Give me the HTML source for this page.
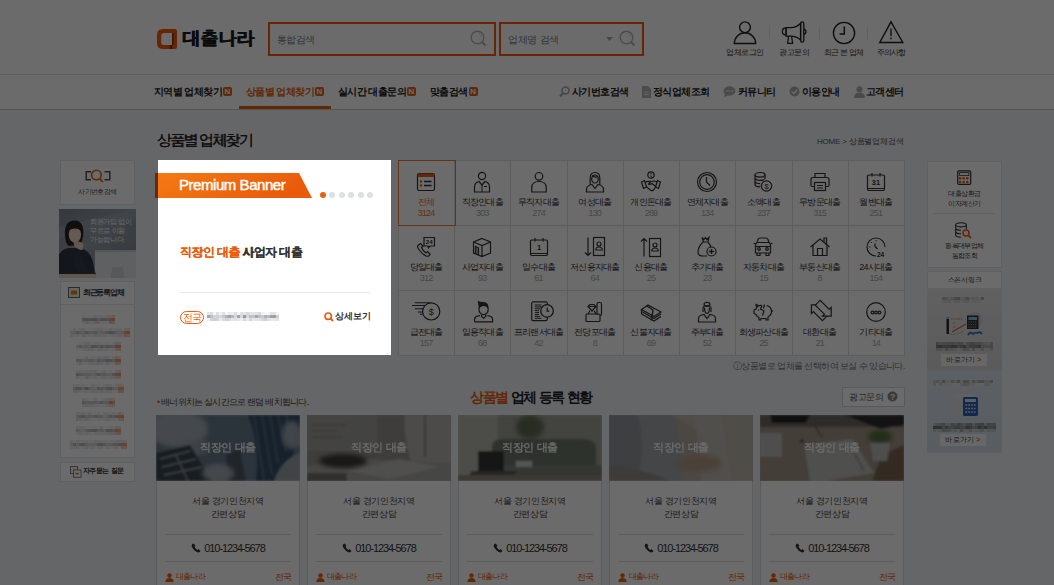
<!DOCTYPE html>
<html><head><meta charset="utf-8">
<style>
*{margin:0;padding:0;box-sizing:border-box}
html,body{width:1054px;height:585px;overflow:hidden}
body{position:relative;background:#f1f2f5;font-family:"Liberation Sans",sans-serif;color:#333}
.a{position:absolute;white-space:nowrap}
#hdr{position:absolute;left:0;top:0;width:1054px;height:109px;background:#fff}
#l1{position:absolute;left:0;top:74px;width:1054px;height:1px;background:#e3e3e3}
#l2{position:absolute;left:0;top:109px;width:1054px;height:1px;background:#c9c9c9}
.sb{position:absolute;border:2px solid #f85a0a;height:34px;top:22px}
.nav{font-size:10px;font-weight:bold;color:#222;top:85.3px;letter-spacing:-0.6px}
.nb{display:inline-block;width:9px;height:9px;border-radius:2px;background:#e8650f;color:#fff;font-size:8px;line-height:9px;text-align:center;vertical-align:1.5px;margin-left:1px;font-weight:bold;letter-spacing:0}
.hl{font-size:8px;color:#333;top:47px;letter-spacing:-0.5px}
.sep{position:absolute;width:1px;height:12px;top:27px;background:#e6e6e6}
#grid{position:absolute;left:398px;top:160px;width:506px;height:195px;background:#fff;border-left:1px solid #ddd;border-top:1px solid #ddd}
.cell{position:absolute;width:56.33px;height:65px;border-right:1px solid #ddd;border-bottom:1px solid #ddd}
.cell svg{position:absolute;left:17px;top:10px;overflow:visible}
.cl{position:absolute;left:0;width:100%;text-align:center;font-size:9px;color:#333;top:36px;letter-spacing:-0.75px}
.cn{position:absolute;left:0;width:100%;text-align:center;font-size:9px;color:#aaa;top:48px;letter-spacing:-0.8px}
.box{position:absolute;background:#fff;border:1px solid #e4e4e4}
.card{position:absolute;top:415px;width:144px;height:180px;background:#fff;border:1px solid #dcdcdc}
.ci{position:absolute;left:-1px;top:-1px;width:144px;height:66px}
.ct{position:absolute;left:0;width:100%;text-align:center;color:#fff;font-size:11px;font-weight:bold;top:24px;letter-spacing:-0.8px;word-spacing:2px;opacity:0.92}
.cb1{position:absolute;left:0;width:100%;text-align:center;font-size:9px;color:#444;letter-spacing:-0.3px;line-height:13.2px;top:79px}
.hr{position:absolute;left:8px;width:126px;height:1px;background:#ddd}
.ph{position:absolute;left:0;width:100%;text-align:center;font-size:11px;color:#333;top:126px;letter-spacing:-1.1px}
#ov{position:absolute;left:0;top:0;width:1054px;height:585px;background:rgba(0,0,0,0.58)}
#pop{position:absolute;left:158px;top:160px;width:233px;height:195px;background:#fff}
</style></head><body>
<div id="hdr"></div><div id="l1"></div><div id="l2"></div>

<!-- logo -->
<svg class="a" style="left:157px;top:29px" width="20" height="20" viewBox="0 0 20 20">
<defs><linearGradient id="lgr" x1="0" y1="0" x2="1" y2="0"><stop offset="0" stop-color="#3a0d00"/><stop offset="1" stop-color="#f85a0a" stop-opacity="0"/></linearGradient>
<linearGradient id="lgb" x1="0" y1="0" x2="1" y2="0"><stop offset="0" stop-color="#f85a0a" stop-opacity="0"/><stop offset="1" stop-color="#3a0d00"/></linearGradient></defs>
<path d="M6 0H18Q20 0 20 2V18Q20 20 18 20H6Q0 20 0 14V6Q0 0 6 0ZM7.3 3.9Q4.2 3.9 4.2 7V12.9Q4.2 16.1 7.3 16.1H15.2V3.9Z" fill="#f85a0a" fill-rule="evenodd"/>
<rect x="15.2" y="3.9" width="3" height="12.2" fill="url(#lgr)" opacity="0.9"/>
<rect x="10" y="16.1" width="5.2" height="3.9" fill="url(#lgb)" opacity="0.9"/>
</svg>
<div class="a" style="left:182px;top:26px;font-size:18px;font-weight:bold;color:#1a1a1a;letter-spacing:0px;text-shadow:0.5px 0 0 #1a1a1a">대출나라</div>

<!-- search -->
<div class="sb" style="left:268px;width:228px"></div>
<div class="a" style="left:277px;top:33px;font-size:10px;color:#808080;letter-spacing:-0.67px">통합검색</div>
<svg class="a" style="left:469px;top:29px" width="18" height="18" viewBox="0 0 18 18"><circle cx="8.5" cy="8.5" r="6.3" fill="none" stroke="#b5b5b5" stroke-width="1.4"/><path d="M13 13L16.5 16.5" stroke="#b5b5b5" stroke-width="2.2"/><path d="M9.5 4.5Q12 5 12.6 7.5" fill="none" stroke="#c8c8c8" stroke-width="0.9"/></svg>
<div class="sb" style="left:499px;width:145px"></div>
<div class="a" style="left:508px;top:33px;font-size:10px;color:#808080;letter-spacing:-0.3px">업체명 검색</div>
<svg class="a" style="left:606px;top:37px" width="8" height="5"><path d="M0 0H7L3.5 4Z" fill="#aaa"/></svg>
<svg class="a" style="left:618px;top:29px" width="18" height="18" viewBox="0 0 18 18"><circle cx="8.5" cy="8.5" r="6.3" fill="none" stroke="#b5b5b5" stroke-width="1.4"/><path d="M13 13L16.5 16.5" stroke="#b5b5b5" stroke-width="2.2"/><path d="M9.5 4.5Q12 5 12.6 7.5" fill="none" stroke="#c8c8c8" stroke-width="0.9"/></svg>

<!-- header icons -->
<svg class="a" style="left:732px;top:20px" width="26" height="26" viewBox="0 0 26 26"><circle cx="13" cy="7.3" r="5.4" fill="none" stroke="#222" stroke-width="1.4"/><path d="M2.3 23.5A10.7 10.7 0 0 1 23.7 23.5Z" fill="none" stroke="#222" stroke-width="1.4"/></svg>
<div class="a hl" style="left:726px">업체로그인</div>
<div class="sep" style="left:769px"></div>
<svg class="a" style="left:781px;top:20px" width="28" height="26" viewBox="0 0 28 26"><path d="M5 8.2H3.6Q1.4 8.4 1.4 11.5Q1.4 14.6 3.6 14.8H5Z" fill="none" stroke="#222" stroke-width="1.2"/><path d="M5 7.6H9.5Q15.5 7.6 19.6 3.2V20Q15.5 16.2 9.5 16.2H5Z" fill="none" stroke="#222" stroke-width="1.3" stroke-linejoin="round"/><rect x="19.6" y="1.8" width="3.2" height="20.3" rx="1.6" fill="none" stroke="#222" stroke-width="1.3"/><path d="M22.8 9.2Q25 9.6 25 11.8Q25 14 22.8 14.4" fill="none" stroke="#222" stroke-width="1.2"/><path d="M7.6 16.2L6.6 23.4H11.6L10.6 16.2" fill="none" stroke="#222" stroke-width="1.2" stroke-linejoin="round"/></svg>
<div class="a hl" style="left:779px">광고문의</div>
<div class="sep" style="left:819px"></div>
<svg class="a" style="left:832px;top:21px" width="24" height="24" viewBox="0 0 24 24"><circle cx="12" cy="12" r="10.6" fill="none" stroke="#222" stroke-width="1.4"/><path d="M12.3 5.5V13H7.6" fill="none" stroke="#222" stroke-width="1.5"/></svg>
<div class="a hl" style="left:824px;letter-spacing:-0.75px">최근 본 업체</div>
<div class="sep" style="left:867px"></div>
<svg class="a" style="left:878px;top:20px" width="26" height="24" viewBox="0 0 26 24"><path d="M13 1.8L24.8 22.5H1.8Z" fill="none" stroke="#222" stroke-width="1.4" stroke-linejoin="miter"/><path d="M13 8.6V16.2M13 17.6V19.3" stroke="#222" stroke-width="1.3"/></svg>
<div class="a hl" style="left:877px;letter-spacing:-0.9px">주의사항</div>

<!-- nav -->
<div class="a nav" style="left:154px">지역별 업체찾기<span class="nb">N</span></div>
<div class="a nav" style="left:246px;color:#e8600f">상품별 업체찾기<span class="nb">N</span></div>
<div style="position:absolute;left:239px;top:106px;width:92px;height:3px;background:#e8600f"></div>
<div class="a nav" style="left:338px">실시간 대출문의<span class="nb">N</span></div>
<div class="a nav" style="left:430px">맞춤검색<span class="nb">N</span></div>

<svg class="a" style="left:559px;top:86px" width="11" height="12" viewBox="0 0 11 12"><circle cx="6.5" cy="4.5" r="3.5" fill="none" stroke="#aaa" stroke-width="1.6"/><path d="M4 7L1 10.5" stroke="#aaa" stroke-width="2"/></svg>
<div class="a nav" style="left:572px">사기번호검색</div>
<svg class="a" style="left:642px;top:86px" width="9" height="12" viewBox="0 0 9 12"><path d="M0 0H6L9 3V12H0Z" fill="#b5b5b5"/><path d="M2 6H7M2 8.5H7" stroke="#fff" stroke-width="0.8"/></svg>
<div class="a nav" style="left:653px">정식업체조회</div>
<svg class="a" style="left:723px;top:86px" width="13" height="12" viewBox="0 0 13 12"><ellipse cx="6.5" cy="5" rx="6" ry="4.7" fill="#b0b0b0"/><path d="M2 8L1 11.5L5 9" fill="#b0b0b0"/><circle cx="4" cy="5" r="0.8" fill="#fff"/><circle cx="6.5" cy="5" r="0.8" fill="#fff"/><circle cx="9" cy="5" r="0.8" fill="#fff"/></svg>
<div class="a nav" style="left:738px">커뮤니티</div>
<svg class="a" style="left:789px;top:86px" width="11" height="11" viewBox="0 0 11 11"><circle cx="5.5" cy="5.5" r="5" fill="#b0b0b0"/><path d="M2.8 5.6L4.8 7.5L8.3 3.8" fill="none" stroke="#fff" stroke-width="1.3"/></svg>
<div class="a nav" style="left:802px">이용안내</div>
<svg class="a" style="left:854px;top:86px" width="11" height="12" viewBox="0 0 11 12"><circle cx="5.5" cy="3.2" r="3" fill="#b0b0b0"/><path d="M0 12Q0 6.5 5.5 6.5Q11 6.5 11 12Z" fill="#b0b0b0"/></svg>
<div class="a nav" style="left:866px">고객센터</div>

<!-- title -->
<div class="a" style="left:157px;top:131px;font-size:15px;color:#222;letter-spacing:-1.8px;text-shadow:0.35px 0 0 #222">상품별 업체찾기</div>
<div class="a" style="left:817px;top:136px;font-size:8px;color:#555;letter-spacing:-0.2px">HOME &gt; 상품별업체검색</div>

<!-- left sidebar -->
<div class="box" style="left:60px;top:160px;width:75px;height:45px"></div>
<svg class="a" style="left:85px;top:168px" width="26" height="15" viewBox="0 0 26 15"><path d="M6 3.8H1.2V11.8H6M19.5 3.8H24.8V11.8H19.5" fill="none" stroke="#555" stroke-width="1.5"/><circle cx="11.4" cy="7" r="4.8" fill="none" stroke="#e8600f" stroke-width="1.6"/><path d="M14.6 10.4L17.8 14" stroke="#e8600f" stroke-width="1.8"/></svg>
<div class="a" style="left:60px;width:75px;text-align:center;top:187px;font-size:7px;color:#444;letter-spacing:-0.6px">사기번호검색</div>
<svg class="a" style="left:59px;top:208.5px" width="77" height="69" viewBox="0 0 75 69" preserveAspectRatio="none">
<defs><linearGradient id="wb" x1="0" y1="0" x2="1" y2="1"><stop offset="0" stop-color="#7f8995"/><stop offset="0.45" stop-color="#959fab"/><stop offset="1" stop-color="#7a8490"/></linearGradient><filter id="wbl"><feGaussianBlur stdDeviation="0.6"/></filter></defs>
<rect width="75" height="69" fill="url(#wb)"/>
<path d="M0 18L75 0V8L0 30Z" fill="#a9b2bc" opacity="0.35"/>
<rect x="35" y="41" width="40" height="28" fill="#e3e4e6"/>
<rect x="35" y="41" width="40" height="2" fill="#c9cbce"/>
<path d="M52 58H62L64 69H50Z" fill="#d0d2d5"/>
<g filter="url(#wbl)">
<path d="M6 28Q4 12 15 11.5Q25 12 23.5 26Q23 33 20 36L9 37Q6 33 6 28Z" fill="#2b2320"/>
<ellipse cx="15.5" cy="25.5" rx="6" ry="8" fill="#efd6c6"/>
<path d="M9 21Q11 15 17 16Q21.5 17 21.5 22Q18 18.5 12.5 20Z" fill="#2b2320"/>
<path d="M-2 69V50Q0 41 9 39H21Q32 42 34 58L36 69Z" fill="#2d3542"/>
<path d="M14 33Q20 31 24 35L23 41Q18 41 15 37Z" fill="#eccfbc"/>
<path d="M19 40L28 60L36 64L35 69H22L13 52Z" fill="#323b49"/>
<rect x="0" y="65" width="36" height="4" fill="#e6d0c2"/>
</g>
<text x="30" y="15" font-size="7" fill="#f4f4f4" letter-spacing="-0.35" font-family="Liberation Sans">회원가입 없이</text>
<text x="30" y="24" font-size="7" fill="#f4f4f4" letter-spacing="-0.35" font-family="Liberation Sans">무료로 이용</text>
<text x="30" y="33" font-size="7" fill="#f4f4f4" letter-spacing="-0.35" font-family="Liberation Sans">가능합니다.</text>
</svg>
<div class="box" style="left:60px;top:281px;width:75px;height:177px"></div>
<div class="a" style="left:61px;top:304px;width:73px;height:1px;background:#e6e6e6"></div>
<svg class="a" style="left:68px;top:287px" width="12" height="11" viewBox="0 0 12 11"><rect x="0.5" y="0.5" width="11" height="10" fill="#eee" stroke="#666"/><rect x="3" y="3.5" width="6" height="4" fill="#e8850f"/></svg>
<div class="a" style="left:83px;top:287px;font-size:8px;color:#333;font-weight:bold;letter-spacing:-1.3px">최근등록업체</div>
<div class="a" style="left:82.0px;top:314.5px;width:3px;height:3px;background:#f2f2f5"></div><div class="a" style="left:82.0px;top:317.5px;width:3px;height:3px;background:#bdbdc0"></div><div class="a" style="left:82.0px;top:320.5px;width:3px;height:3px;background:#ededf0"></div><div class="a" style="left:85.0px;top:314.5px;width:3px;height:3px;background:#fcfcff"></div><div class="a" style="left:85.0px;top:317.5px;width:3px;height:3px;background:#b7b7ba"></div><div class="a" style="left:85.0px;top:320.5px;width:3px;height:3px;background:#e3e3e6"></div><div class="a" style="left:88.0px;top:314.5px;width:3px;height:3px;background:#f9f9fc"></div><div class="a" style="left:88.0px;top:317.5px;width:3px;height:3px;background:#bababd"></div><div class="a" style="left:88.0px;top:320.5px;width:3px;height:3px;background:#ececef"></div><div class="a" style="left:91.0px;top:314.5px;width:3px;height:3px;background:#fafafd"></div><div class="a" style="left:91.0px;top:317.5px;width:3px;height:3px;background:#b7b7ba"></div><div class="a" style="left:91.0px;top:320.5px;width:3px;height:3px;background:#f1f1f4"></div><div class="a" style="left:94.0px;top:314.5px;width:3px;height:3px;background:#eeeef1"></div><div class="a" style="left:94.0px;top:317.5px;width:3px;height:3px;background:#b6b6b9"></div><div class="a" style="left:94.0px;top:320.5px;width:3px;height:3px;background:#e3e3e6"></div><div class="a" style="left:97.0px;top:314.5px;width:3px;height:3px;background:#f5f5f8"></div><div class="a" style="left:97.0px;top:317.5px;width:3px;height:3px;background:#ceced1"></div><div class="a" style="left:97.0px;top:320.5px;width:3px;height:3px;background:#e3e3e6"></div><div class="a" style="left:100.0px;top:314.5px;width:3px;height:3px;background:#efeff2"></div><div class="a" style="left:100.0px;top:317.5px;width:3px;height:3px;background:#b9b9bc"></div><div class="a" style="left:100.0px;top:320.5px;width:3px;height:3px;background:#f2f2f5"></div><div class="a" style="left:103.0px;top:314.5px;width:3px;height:3px;background:#f5f5f8"></div><div class="a" style="left:103.0px;top:317.5px;width:3px;height:3px;background:#b7b7ba"></div><div class="a" style="left:103.0px;top:320.5px;width:3px;height:3px;background:#f3f3f6"></div><div class="a" style="left:106.0px;top:314.5px;width:3px;height:3px;background:#ebebee"></div><div class="a" style="left:106.0px;top:317.5px;width:3px;height:3px;background:#c2c2c5"></div><div class="a" style="left:106.0px;top:320.5px;width:3px;height:3px;background:#f5f5f8"></div><div class="a" style="left:109.0px;top:314.5px;width:3px;height:3px;background:#fde4c7"></div><div class="a" style="left:109.0px;top:317.5px;width:3px;height:3px;background:#f4a678"></div><div class="a" style="left:109.0px;top:320.5px;width:3px;height:3px;background:#e7c8b3"></div><div class="a" style="left:112.0px;top:314.5px;width:3px;height:3px;background:#fad6cf"></div><div class="a" style="left:112.0px;top:317.5px;width:3px;height:3px;background:#ef987d"></div><div class="a" style="left:112.0px;top:320.5px;width:3px;height:3px;background:#e9d3bb"></div><div class="a" style="left:69.5px;top:328.4px;width:3px;height:3px;background:#f9f9fc"></div><div class="a" style="left:69.5px;top:331.4px;width:3px;height:3px;background:#dfdfe2"></div><div class="a" style="left:69.5px;top:334.4px;width:3px;height:3px;background:#e6e6e9"></div><div class="a" style="left:72.5px;top:328.4px;width:3px;height:3px;background:#ebebee"></div><div class="a" style="left:72.5px;top:331.4px;width:3px;height:3px;background:#d9d9dc"></div><div class="a" style="left:72.5px;top:334.4px;width:3px;height:3px;background:#f3f3f6"></div><div class="a" style="left:75.5px;top:328.4px;width:3px;height:3px;background:#fcfcff"></div><div class="a" style="left:75.5px;top:331.4px;width:3px;height:3px;background:#c0c0c3"></div><div class="a" style="left:75.5px;top:334.4px;width:3px;height:3px;background:#ececef"></div><div class="a" style="left:78.5px;top:328.4px;width:3px;height:3px;background:#ebebee"></div><div class="a" style="left:78.5px;top:331.4px;width:3px;height:3px;background:#d7d7da"></div><div class="a" style="left:78.5px;top:334.4px;width:3px;height:3px;background:#f7f7fa"></div><div class="a" style="left:81.5px;top:328.4px;width:3px;height:3px;background:#eaeaed"></div><div class="a" style="left:81.5px;top:331.4px;width:3px;height:3px;background:#d8d8db"></div><div class="a" style="left:81.5px;top:334.4px;width:3px;height:3px;background:#e2e2e5"></div><div class="a" style="left:84.5px;top:328.4px;width:3px;height:3px;background:#fbfbfe"></div><div class="a" style="left:84.5px;top:331.4px;width:3px;height:3px;background:#c1c1c4"></div><div class="a" style="left:84.5px;top:334.4px;width:3px;height:3px;background:#f0f0f3"></div><div class="a" style="left:87.5px;top:328.4px;width:3px;height:3px;background:#f9f9fc"></div><div class="a" style="left:87.5px;top:331.4px;width:3px;height:3px;background:#cfcfd2"></div><div class="a" style="left:87.5px;top:334.4px;width:3px;height:3px;background:#ebebee"></div><div class="a" style="left:90.5px;top:328.4px;width:3px;height:3px;background:#f6f6f9"></div><div class="a" style="left:90.5px;top:331.4px;width:3px;height:3px;background:#d9d9dc"></div><div class="a" style="left:90.5px;top:334.4px;width:3px;height:3px;background:#efeff2"></div><div class="a" style="left:93.5px;top:328.4px;width:3px;height:3px;background:#f3f3f6"></div><div class="a" style="left:93.5px;top:331.4px;width:3px;height:3px;background:#c7c7ca"></div><div class="a" style="left:93.5px;top:334.4px;width:3px;height:3px;background:#e8e8eb"></div><div class="a" style="left:96.5px;top:328.4px;width:3px;height:3px;background:#ededf0"></div><div class="a" style="left:96.5px;top:331.4px;width:3px;height:3px;background:#e0e0e3"></div><div class="a" style="left:96.5px;top:334.4px;width:3px;height:3px;background:#e8e8eb"></div><div class="a" style="left:99.5px;top:328.4px;width:3px;height:3px;background:#eaeaed"></div><div class="a" style="left:99.5px;top:331.4px;width:3px;height:3px;background:#d8d8db"></div><div class="a" style="left:99.5px;top:334.4px;width:3px;height:3px;background:#eaeaed"></div><div class="a" style="left:102.5px;top:328.4px;width:3px;height:3px;background:#f8f8fb"></div><div class="a" style="left:102.5px;top:331.4px;width:3px;height:3px;background:#d3d3d6"></div><div class="a" style="left:102.5px;top:334.4px;width:3px;height:3px;background:#ebebee"></div><div class="a" style="left:105.5px;top:328.4px;width:3px;height:3px;background:#f6f6f9"></div><div class="a" style="left:105.5px;top:331.4px;width:3px;height:3px;background:#c6c6c9"></div><div class="a" style="left:105.5px;top:334.4px;width:3px;height:3px;background:#f4f4f7"></div><div class="a" style="left:108.5px;top:328.4px;width:3px;height:3px;background:#eaeaed"></div><div class="a" style="left:108.5px;top:331.4px;width:3px;height:3px;background:#bbbbbe"></div><div class="a" style="left:108.5px;top:334.4px;width:3px;height:3px;background:#f1f1f4"></div><div class="a" style="left:111.5px;top:328.4px;width:3px;height:3px;background:#f5f5f8"></div><div class="a" style="left:111.5px;top:331.4px;width:3px;height:3px;background:#bebec1"></div><div class="a" style="left:111.5px;top:334.4px;width:3px;height:3px;background:#ebebee"></div><div class="a" style="left:114.5px;top:328.4px;width:3px;height:3px;background:#ececef"></div><div class="a" style="left:114.5px;top:331.4px;width:3px;height:3px;background:#d3d3d6"></div><div class="a" style="left:114.5px;top:334.4px;width:3px;height:3px;background:#eeeef1"></div><div class="a" style="left:117.5px;top:328.4px;width:3px;height:3px;background:#e9e9ec"></div><div class="a" style="left:117.5px;top:331.4px;width:3px;height:3px;background:#dedee1"></div><div class="a" style="left:117.5px;top:334.4px;width:3px;height:3px;background:#e3e3e6"></div><div class="a" style="left:120.5px;top:328.4px;width:3px;height:3px;background:#f9f9fc"></div><div class="a" style="left:120.5px;top:331.4px;width:3px;height:3px;background:#d8d8db"></div><div class="a" style="left:120.5px;top:334.4px;width:3px;height:3px;background:#ebebee"></div><div class="a" style="left:123.5px;top:328.4px;width:3px;height:3px;background:#f3e8d1"></div><div class="a" style="left:123.5px;top:331.4px;width:3px;height:3px;background:#f5a37e"></div><div class="a" style="left:123.5px;top:334.4px;width:3px;height:3px;background:#f4c3b4"></div><div class="a" style="left:126.5px;top:328.4px;width:3px;height:3px;background:#f1e1dc"></div><div class="a" style="left:126.5px;top:331.4px;width:3px;height:3px;background:#f7966d"></div><div class="a" style="left:126.5px;top:334.4px;width:3px;height:3px;background:#fdd7bb"></div><div class="a" style="left:75.6px;top:342.3px;width:3px;height:3px;background:#fcfcff"></div><div class="a" style="left:75.6px;top:345.3px;width:3px;height:3px;background:#d8d8db"></div><div class="a" style="left:75.6px;top:348.3px;width:3px;height:3px;background:#f6f6f9"></div><div class="a" style="left:78.6px;top:342.3px;width:3px;height:3px;background:#f6f6f9"></div><div class="a" style="left:78.6px;top:345.3px;width:3px;height:3px;background:#c6c6c9"></div><div class="a" style="left:78.6px;top:348.3px;width:3px;height:3px;background:#f7f7fa"></div><div class="a" style="left:81.6px;top:342.3px;width:3px;height:3px;background:#f4f4f7"></div><div class="a" style="left:81.6px;top:345.3px;width:3px;height:3px;background:#dedee1"></div><div class="a" style="left:81.6px;top:348.3px;width:3px;height:3px;background:#ececef"></div><div class="a" style="left:84.6px;top:342.3px;width:3px;height:3px;background:#e8e8eb"></div><div class="a" style="left:84.6px;top:345.3px;width:3px;height:3px;background:#d1d1d4"></div><div class="a" style="left:84.6px;top:348.3px;width:3px;height:3px;background:#ececef"></div><div class="a" style="left:87.6px;top:342.3px;width:3px;height:3px;background:#ededf0"></div><div class="a" style="left:87.6px;top:345.3px;width:3px;height:3px;background:#dbdbde"></div><div class="a" style="left:87.6px;top:348.3px;width:3px;height:3px;background:#e4e4e7"></div><div class="a" style="left:90.6px;top:342.3px;width:3px;height:3px;background:#f7f7fa"></div><div class="a" style="left:90.6px;top:345.3px;width:3px;height:3px;background:#b7b7ba"></div><div class="a" style="left:90.6px;top:348.3px;width:3px;height:3px;background:#e7e7ea"></div><div class="a" style="left:93.6px;top:342.3px;width:3px;height:3px;background:#f1f1f4"></div><div class="a" style="left:93.6px;top:345.3px;width:3px;height:3px;background:#bcbcbf"></div><div class="a" style="left:93.6px;top:348.3px;width:3px;height:3px;background:#f8f8fb"></div><div class="a" style="left:96.6px;top:342.3px;width:3px;height:3px;background:#efeff2"></div><div class="a" style="left:96.6px;top:345.3px;width:3px;height:3px;background:#cdcdd0"></div><div class="a" style="left:96.6px;top:348.3px;width:3px;height:3px;background:#ededf0"></div><div class="a" style="left:99.6px;top:342.3px;width:3px;height:3px;background:#f7f7fa"></div><div class="a" style="left:99.6px;top:345.3px;width:3px;height:3px;background:#b9b9bc"></div><div class="a" style="left:99.6px;top:348.3px;width:3px;height:3px;background:#e6e6e9"></div><div class="a" style="left:102.6px;top:342.3px;width:3px;height:3px;background:#f6f6f9"></div><div class="a" style="left:102.6px;top:345.3px;width:3px;height:3px;background:#cdcdd0"></div><div class="a" style="left:102.6px;top:348.3px;width:3px;height:3px;background:#f2f2f5"></div><div class="a" style="left:105.6px;top:342.3px;width:3px;height:3px;background:#f0f0f3"></div><div class="a" style="left:105.6px;top:345.3px;width:3px;height:3px;background:#bcbcbf"></div><div class="a" style="left:105.6px;top:348.3px;width:3px;height:3px;background:#eeeef1"></div><div class="a" style="left:108.6px;top:342.3px;width:3px;height:3px;background:#f9f9fc"></div><div class="a" style="left:108.6px;top:345.3px;width:3px;height:3px;background:#c5c5c8"></div><div class="a" style="left:108.6px;top:348.3px;width:3px;height:3px;background:#f7f7fa"></div><div class="a" style="left:111.6px;top:342.3px;width:3px;height:3px;background:#f5f5f8"></div><div class="a" style="left:111.6px;top:345.3px;width:3px;height:3px;background:#cacacd"></div><div class="a" style="left:111.6px;top:348.3px;width:3px;height:3px;background:#f6f6f9"></div><div class="a" style="left:114.6px;top:342.3px;width:3px;height:3px;background:#f5d9ca"></div><div class="a" style="left:114.6px;top:345.3px;width:3px;height:3px;background:#e49970"></div><div class="a" style="left:114.6px;top:348.3px;width:3px;height:3px;background:#edd6b9"></div><div class="a" style="left:117.6px;top:342.3px;width:3px;height:3px;background:#e9e1d8"></div><div class="a" style="left:117.6px;top:345.3px;width:3px;height:3px;background:#e79c75"></div><div class="a" style="left:117.6px;top:348.3px;width:3px;height:3px;background:#e6c5bf"></div><div class="a" style="left:75.6px;top:356.2px;width:3px;height:3px;background:#f9f9fc"></div><div class="a" style="left:75.6px;top:359.2px;width:3px;height:3px;background:#cbcbce"></div><div class="a" style="left:75.6px;top:362.2px;width:3px;height:3px;background:#f4f4f7"></div><div class="a" style="left:78.6px;top:356.2px;width:3px;height:3px;background:#fafafd"></div><div class="a" style="left:78.6px;top:359.2px;width:3px;height:3px;background:#c8c8cb"></div><div class="a" style="left:78.6px;top:362.2px;width:3px;height:3px;background:#e5e5e8"></div><div class="a" style="left:81.6px;top:356.2px;width:3px;height:3px;background:#f8f8fb"></div><div class="a" style="left:81.6px;top:359.2px;width:3px;height:3px;background:#dbdbde"></div><div class="a" style="left:81.6px;top:362.2px;width:3px;height:3px;background:#f5f5f8"></div><div class="a" style="left:84.6px;top:356.2px;width:3px;height:3px;background:#e9e9ec"></div><div class="a" style="left:84.6px;top:359.2px;width:3px;height:3px;background:#d1d1d4"></div><div class="a" style="left:84.6px;top:362.2px;width:3px;height:3px;background:#f6f6f9"></div><div class="a" style="left:87.6px;top:356.2px;width:3px;height:3px;background:#f9f9fc"></div><div class="a" style="left:87.6px;top:359.2px;width:3px;height:3px;background:#cdcdd0"></div><div class="a" style="left:87.6px;top:362.2px;width:3px;height:3px;background:#ededf0"></div><div class="a" style="left:90.6px;top:356.2px;width:3px;height:3px;background:#f4f4f7"></div><div class="a" style="left:90.6px;top:359.2px;width:3px;height:3px;background:#cdcdd0"></div><div class="a" style="left:90.6px;top:362.2px;width:3px;height:3px;background:#e4e4e7"></div><div class="a" style="left:93.6px;top:356.2px;width:3px;height:3px;background:#f7f7fa"></div><div class="a" style="left:93.6px;top:359.2px;width:3px;height:3px;background:#dcdcdf"></div><div class="a" style="left:93.6px;top:362.2px;width:3px;height:3px;background:#ededf0"></div><div class="a" style="left:96.6px;top:356.2px;width:3px;height:3px;background:#e9e9ec"></div><div class="a" style="left:96.6px;top:359.2px;width:3px;height:3px;background:#c0c0c3"></div><div class="a" style="left:96.6px;top:362.2px;width:3px;height:3px;background:#e3e3e6"></div><div class="a" style="left:99.6px;top:356.2px;width:3px;height:3px;background:#eeeef1"></div><div class="a" style="left:99.6px;top:359.2px;width:3px;height:3px;background:#d0d0d3"></div><div class="a" style="left:99.6px;top:362.2px;width:3px;height:3px;background:#e6e6e9"></div><div class="a" style="left:102.6px;top:356.2px;width:3px;height:3px;background:#ebebee"></div><div class="a" style="left:102.6px;top:359.2px;width:3px;height:3px;background:#c9c9cc"></div><div class="a" style="left:102.6px;top:362.2px;width:3px;height:3px;background:#f4f4f7"></div><div class="a" style="left:105.6px;top:356.2px;width:3px;height:3px;background:#e9e9ec"></div><div class="a" style="left:105.6px;top:359.2px;width:3px;height:3px;background:#bababd"></div><div class="a" style="left:105.6px;top:362.2px;width:3px;height:3px;background:#e1e1e4"></div><div class="a" style="left:108.6px;top:356.2px;width:3px;height:3px;background:#fafafd"></div><div class="a" style="left:108.6px;top:359.2px;width:3px;height:3px;background:#bdbdc0"></div><div class="a" style="left:108.6px;top:362.2px;width:3px;height:3px;background:#f2f2f5"></div><div class="a" style="left:111.6px;top:356.2px;width:3px;height:3px;background:#ebebee"></div><div class="a" style="left:111.6px;top:359.2px;width:3px;height:3px;background:#cbcbce"></div><div class="a" style="left:111.6px;top:362.2px;width:3px;height:3px;background:#f4f4f7"></div><div class="a" style="left:114.6px;top:356.2px;width:3px;height:3px;background:#e9d4cc"></div><div class="a" style="left:114.6px;top:359.2px;width:3px;height:3px;background:#f5a070"></div><div class="a" style="left:114.6px;top:362.2px;width:3px;height:3px;background:#fac9bd"></div><div class="a" style="left:117.6px;top:356.2px;width:3px;height:3px;background:#fcddd5"></div><div class="a" style="left:117.6px;top:359.2px;width:3px;height:3px;background:#e5977b"></div><div class="a" style="left:117.6px;top:362.2px;width:3px;height:3px;background:#f4d0c1"></div><div class="a" style="left:75.6px;top:370.1px;width:3px;height:3px;background:#f1f1f4"></div><div class="a" style="left:75.6px;top:373.1px;width:3px;height:3px;background:#b9b9bc"></div><div class="a" style="left:75.6px;top:376.1px;width:3px;height:3px;background:#e5e5e8"></div><div class="a" style="left:78.6px;top:370.1px;width:3px;height:3px;background:#ebebee"></div><div class="a" style="left:78.6px;top:373.1px;width:3px;height:3px;background:#c9c9cc"></div><div class="a" style="left:78.6px;top:376.1px;width:3px;height:3px;background:#f8f8fb"></div><div class="a" style="left:81.6px;top:370.1px;width:3px;height:3px;background:#f0f0f3"></div><div class="a" style="left:81.6px;top:373.1px;width:3px;height:3px;background:#d2d2d5"></div><div class="a" style="left:81.6px;top:376.1px;width:3px;height:3px;background:#f7f7fa"></div><div class="a" style="left:84.6px;top:370.1px;width:3px;height:3px;background:#ededf0"></div><div class="a" style="left:84.6px;top:373.1px;width:3px;height:3px;background:#d5d5d8"></div><div class="a" style="left:84.6px;top:376.1px;width:3px;height:3px;background:#e1e1e4"></div><div class="a" style="left:87.6px;top:370.1px;width:3px;height:3px;background:#eeeef1"></div><div class="a" style="left:87.6px;top:373.1px;width:3px;height:3px;background:#d5d5d8"></div><div class="a" style="left:87.6px;top:376.1px;width:3px;height:3px;background:#ececef"></div><div class="a" style="left:90.6px;top:370.1px;width:3px;height:3px;background:#ececef"></div><div class="a" style="left:90.6px;top:373.1px;width:3px;height:3px;background:#e0e0e3"></div><div class="a" style="left:90.6px;top:376.1px;width:3px;height:3px;background:#f2f2f5"></div><div class="a" style="left:93.6px;top:370.1px;width:3px;height:3px;background:#e8e8eb"></div><div class="a" style="left:93.6px;top:373.1px;width:3px;height:3px;background:#d5d5d8"></div><div class="a" style="left:93.6px;top:376.1px;width:3px;height:3px;background:#eaeaed"></div><div class="a" style="left:96.6px;top:370.1px;width:3px;height:3px;background:#fcfcff"></div><div class="a" style="left:96.6px;top:373.1px;width:3px;height:3px;background:#b9b9bc"></div><div class="a" style="left:96.6px;top:376.1px;width:3px;height:3px;background:#f7f7fa"></div><div class="a" style="left:99.6px;top:370.1px;width:3px;height:3px;background:#f0f0f3"></div><div class="a" style="left:99.6px;top:373.1px;width:3px;height:3px;background:#d5d5d8"></div><div class="a" style="left:99.6px;top:376.1px;width:3px;height:3px;background:#ececef"></div><div class="a" style="left:102.6px;top:370.1px;width:3px;height:3px;background:#ededf0"></div><div class="a" style="left:102.6px;top:373.1px;width:3px;height:3px;background:#cacacd"></div><div class="a" style="left:102.6px;top:376.1px;width:3px;height:3px;background:#e8e8eb"></div><div class="a" style="left:105.6px;top:370.1px;width:3px;height:3px;background:#f9f9fc"></div><div class="a" style="left:105.6px;top:373.1px;width:3px;height:3px;background:#d6d6d9"></div><div class="a" style="left:105.6px;top:376.1px;width:3px;height:3px;background:#f1f1f4"></div><div class="a" style="left:108.6px;top:370.1px;width:3px;height:3px;background:#f2f2f5"></div><div class="a" style="left:108.6px;top:373.1px;width:3px;height:3px;background:#dcdcdf"></div><div class="a" style="left:108.6px;top:376.1px;width:3px;height:3px;background:#e8e8eb"></div><div class="a" style="left:111.6px;top:370.1px;width:3px;height:3px;background:#fbfbfe"></div><div class="a" style="left:111.6px;top:373.1px;width:3px;height:3px;background:#c0c0c3"></div><div class="a" style="left:111.6px;top:376.1px;width:3px;height:3px;background:#e8e8eb"></div><div class="a" style="left:114.6px;top:370.1px;width:3px;height:3px;background:#f5e9cd"></div><div class="a" style="left:114.6px;top:373.1px;width:3px;height:3px;background:#e8a47b"></div><div class="a" style="left:114.6px;top:376.1px;width:3px;height:3px;background:#f1d8b2"></div><div class="a" style="left:117.6px;top:370.1px;width:3px;height:3px;background:#e9dad5"></div><div class="a" style="left:117.6px;top:373.1px;width:3px;height:3px;background:#ea9a82"></div><div class="a" style="left:117.6px;top:376.1px;width:3px;height:3px;background:#f9ccc0"></div><div class="a" style="left:72.6px;top:384.0px;width:3px;height:3px;background:#f3f3f6"></div><div class="a" style="left:72.6px;top:387.0px;width:3px;height:3px;background:#cbcbce"></div><div class="a" style="left:72.6px;top:390.0px;width:3px;height:3px;background:#e3e3e6"></div><div class="a" style="left:75.6px;top:384.0px;width:3px;height:3px;background:#efeff2"></div><div class="a" style="left:75.6px;top:387.0px;width:3px;height:3px;background:#bababd"></div><div class="a" style="left:75.6px;top:390.0px;width:3px;height:3px;background:#e8e8eb"></div><div class="a" style="left:78.6px;top:384.0px;width:3px;height:3px;background:#f7f7fa"></div><div class="a" style="left:78.6px;top:387.0px;width:3px;height:3px;background:#c0c0c3"></div><div class="a" style="left:78.6px;top:390.0px;width:3px;height:3px;background:#ebebee"></div><div class="a" style="left:81.6px;top:384.0px;width:3px;height:3px;background:#eeeef1"></div><div class="a" style="left:81.6px;top:387.0px;width:3px;height:3px;background:#d2d2d5"></div><div class="a" style="left:81.6px;top:390.0px;width:3px;height:3px;background:#f4f4f7"></div><div class="a" style="left:84.6px;top:384.0px;width:3px;height:3px;background:#fbfbfe"></div><div class="a" style="left:84.6px;top:387.0px;width:3px;height:3px;background:#b4b4b7"></div><div class="a" style="left:84.6px;top:390.0px;width:3px;height:3px;background:#f0f0f3"></div><div class="a" style="left:87.6px;top:384.0px;width:3px;height:3px;background:#fcfcff"></div><div class="a" style="left:87.6px;top:387.0px;width:3px;height:3px;background:#cacacd"></div><div class="a" style="left:87.6px;top:390.0px;width:3px;height:3px;background:#f5f5f8"></div><div class="a" style="left:90.6px;top:384.0px;width:3px;height:3px;background:#eaeaed"></div><div class="a" style="left:90.6px;top:387.0px;width:3px;height:3px;background:#dedee1"></div><div class="a" style="left:90.6px;top:390.0px;width:3px;height:3px;background:#e4e4e7"></div><div class="a" style="left:93.6px;top:384.0px;width:3px;height:3px;background:#f4f4f7"></div><div class="a" style="left:93.6px;top:387.0px;width:3px;height:3px;background:#e1e1e4"></div><div class="a" style="left:93.6px;top:390.0px;width:3px;height:3px;background:#e7e7ea"></div><div class="a" style="left:96.6px;top:384.0px;width:3px;height:3px;background:#f7f7fa"></div><div class="a" style="left:96.6px;top:387.0px;width:3px;height:3px;background:#bfbfc2"></div><div class="a" style="left:96.6px;top:390.0px;width:3px;height:3px;background:#eeeef1"></div><div class="a" style="left:99.6px;top:384.0px;width:3px;height:3px;background:#fcfcff"></div><div class="a" style="left:99.6px;top:387.0px;width:3px;height:3px;background:#c9c9cc"></div><div class="a" style="left:99.6px;top:390.0px;width:3px;height:3px;background:#e3e3e6"></div><div class="a" style="left:102.6px;top:384.0px;width:3px;height:3px;background:#f4f4f7"></div><div class="a" style="left:102.6px;top:387.0px;width:3px;height:3px;background:#d1d1d4"></div><div class="a" style="left:102.6px;top:390.0px;width:3px;height:3px;background:#ededf0"></div><div class="a" style="left:105.6px;top:384.0px;width:3px;height:3px;background:#eaeaed"></div><div class="a" style="left:105.6px;top:387.0px;width:3px;height:3px;background:#bebec1"></div><div class="a" style="left:105.6px;top:390.0px;width:3px;height:3px;background:#e6e6e9"></div><div class="a" style="left:108.6px;top:384.0px;width:3px;height:3px;background:#ececef"></div><div class="a" style="left:108.6px;top:387.0px;width:3px;height:3px;background:#b5b5b8"></div><div class="a" style="left:108.6px;top:390.0px;width:3px;height:3px;background:#e5e5e8"></div><div class="a" style="left:111.6px;top:384.0px;width:3px;height:3px;background:#fafafd"></div><div class="a" style="left:111.6px;top:387.0px;width:3px;height:3px;background:#d1d1d4"></div><div class="a" style="left:111.6px;top:390.0px;width:3px;height:3px;background:#f5f5f8"></div><div class="a" style="left:114.6px;top:384.0px;width:3px;height:3px;background:#ececef"></div><div class="a" style="left:114.6px;top:387.0px;width:3px;height:3px;background:#dbdbde"></div><div class="a" style="left:114.6px;top:390.0px;width:3px;height:3px;background:#f4f4f7"></div><div class="a" style="left:117.6px;top:384.0px;width:3px;height:3px;background:#f8e7d1"></div><div class="a" style="left:117.6px;top:387.0px;width:3px;height:3px;background:#e6a57d"></div><div class="a" style="left:117.6px;top:390.0px;width:3px;height:3px;background:#eac1b2"></div><div class="a" style="left:120.6px;top:384.0px;width:3px;height:3px;background:#ffe6c9"></div><div class="a" style="left:120.6px;top:387.0px;width:3px;height:3px;background:#f2ab70"></div><div class="a" style="left:120.6px;top:390.0px;width:3px;height:3px;background:#f3c7b8"></div><div class="a" style="left:82.0px;top:397.9px;width:3px;height:3px;background:#e8e8eb"></div><div class="a" style="left:82.0px;top:400.9px;width:3px;height:3px;background:#c4c4c7"></div><div class="a" style="left:82.0px;top:403.9px;width:3px;height:3px;background:#e7e7ea"></div><div class="a" style="left:85.0px;top:397.9px;width:3px;height:3px;background:#f1f1f4"></div><div class="a" style="left:85.0px;top:400.9px;width:3px;height:3px;background:#d4d4d7"></div><div class="a" style="left:85.0px;top:403.9px;width:3px;height:3px;background:#e8e8eb"></div><div class="a" style="left:88.0px;top:397.9px;width:3px;height:3px;background:#fafafd"></div><div class="a" style="left:88.0px;top:400.9px;width:3px;height:3px;background:#c8c8cb"></div><div class="a" style="left:88.0px;top:403.9px;width:3px;height:3px;background:#e9e9ec"></div><div class="a" style="left:91.0px;top:397.9px;width:3px;height:3px;background:#f9f9fc"></div><div class="a" style="left:91.0px;top:400.9px;width:3px;height:3px;background:#ceced1"></div><div class="a" style="left:91.0px;top:403.9px;width:3px;height:3px;background:#e5e5e8"></div><div class="a" style="left:94.0px;top:397.9px;width:3px;height:3px;background:#e9e9ec"></div><div class="a" style="left:94.0px;top:400.9px;width:3px;height:3px;background:#cacacd"></div><div class="a" style="left:94.0px;top:403.9px;width:3px;height:3px;background:#efeff2"></div><div class="a" style="left:97.0px;top:397.9px;width:3px;height:3px;background:#fafafd"></div><div class="a" style="left:97.0px;top:400.9px;width:3px;height:3px;background:#d5d5d8"></div><div class="a" style="left:97.0px;top:403.9px;width:3px;height:3px;background:#eeeef1"></div><div class="a" style="left:100.0px;top:397.9px;width:3px;height:3px;background:#f8f8fb"></div><div class="a" style="left:100.0px;top:400.9px;width:3px;height:3px;background:#bcbcbf"></div><div class="a" style="left:100.0px;top:403.9px;width:3px;height:3px;background:#f2f2f5"></div><div class="a" style="left:103.0px;top:397.9px;width:3px;height:3px;background:#ececef"></div><div class="a" style="left:103.0px;top:400.9px;width:3px;height:3px;background:#d5d5d8"></div><div class="a" style="left:103.0px;top:403.9px;width:3px;height:3px;background:#f1f1f4"></div><div class="a" style="left:106.0px;top:397.9px;width:3px;height:3px;background:#e8e8eb"></div><div class="a" style="left:106.0px;top:400.9px;width:3px;height:3px;background:#d0d0d3"></div><div class="a" style="left:106.0px;top:403.9px;width:3px;height:3px;background:#e6e6e9"></div><div class="a" style="left:109.0px;top:397.9px;width:3px;height:3px;background:#fcd2de"></div><div class="a" style="left:109.0px;top:400.9px;width:3px;height:3px;background:#e69970"></div><div class="a" style="left:109.0px;top:403.9px;width:3px;height:3px;background:#f5d4c9"></div><div class="a" style="left:112.0px;top:397.9px;width:3px;height:3px;background:#ece3c7"></div><div class="a" style="left:112.0px;top:400.9px;width:3px;height:3px;background:#eca97c"></div><div class="a" style="left:112.0px;top:403.9px;width:3px;height:3px;background:#f6d2c1"></div><div class="a" style="left:76.3px;top:411.8px;width:3px;height:3px;background:#ebebee"></div><div class="a" style="left:76.3px;top:414.8px;width:3px;height:3px;background:#d7d7da"></div><div class="a" style="left:76.3px;top:417.8px;width:3px;height:3px;background:#e2e2e5"></div><div class="a" style="left:79.3px;top:411.8px;width:3px;height:3px;background:#efeff2"></div><div class="a" style="left:79.3px;top:414.8px;width:3px;height:3px;background:#c0c0c3"></div><div class="a" style="left:79.3px;top:417.8px;width:3px;height:3px;background:#e9e9ec"></div><div class="a" style="left:82.3px;top:411.8px;width:3px;height:3px;background:#e9e9ec"></div><div class="a" style="left:82.3px;top:414.8px;width:3px;height:3px;background:#bababd"></div><div class="a" style="left:82.3px;top:417.8px;width:3px;height:3px;background:#f1f1f4"></div><div class="a" style="left:85.3px;top:411.8px;width:3px;height:3px;background:#f6f6f9"></div><div class="a" style="left:85.3px;top:414.8px;width:3px;height:3px;background:#d7d7da"></div><div class="a" style="left:85.3px;top:417.8px;width:3px;height:3px;background:#e1e1e4"></div><div class="a" style="left:88.3px;top:411.8px;width:3px;height:3px;background:#eaeaed"></div><div class="a" style="left:88.3px;top:414.8px;width:3px;height:3px;background:#d0d0d3"></div><div class="a" style="left:88.3px;top:417.8px;width:3px;height:3px;background:#ebebee"></div><div class="a" style="left:91.3px;top:411.8px;width:3px;height:3px;background:#fbfbfe"></div><div class="a" style="left:91.3px;top:414.8px;width:3px;height:3px;background:#d4d4d7"></div><div class="a" style="left:91.3px;top:417.8px;width:3px;height:3px;background:#f4f4f7"></div><div class="a" style="left:94.3px;top:411.8px;width:3px;height:3px;background:#f8f8fb"></div><div class="a" style="left:94.3px;top:414.8px;width:3px;height:3px;background:#c0c0c3"></div><div class="a" style="left:94.3px;top:417.8px;width:3px;height:3px;background:#f7f7fa"></div><div class="a" style="left:97.3px;top:411.8px;width:3px;height:3px;background:#f0f0f3"></div><div class="a" style="left:97.3px;top:414.8px;width:3px;height:3px;background:#d0d0d3"></div><div class="a" style="left:97.3px;top:417.8px;width:3px;height:3px;background:#f1f1f4"></div><div class="a" style="left:100.3px;top:411.8px;width:3px;height:3px;background:#f9f9fc"></div><div class="a" style="left:100.3px;top:414.8px;width:3px;height:3px;background:#d2d2d5"></div><div class="a" style="left:100.3px;top:417.8px;width:3px;height:3px;background:#f1f1f4"></div><div class="a" style="left:103.3px;top:411.8px;width:3px;height:3px;background:#efeff2"></div><div class="a" style="left:103.3px;top:414.8px;width:3px;height:3px;background:#e0e0e3"></div><div class="a" style="left:103.3px;top:417.8px;width:3px;height:3px;background:#f1f1f4"></div><div class="a" style="left:106.3px;top:411.8px;width:3px;height:3px;background:#f0f0f3"></div><div class="a" style="left:106.3px;top:414.8px;width:3px;height:3px;background:#d7d7da"></div><div class="a" style="left:106.3px;top:417.8px;width:3px;height:3px;background:#e7e7ea"></div><div class="a" style="left:109.3px;top:411.8px;width:3px;height:3px;background:#f6f6f9"></div><div class="a" style="left:109.3px;top:414.8px;width:3px;height:3px;background:#bcbcbf"></div><div class="a" style="left:109.3px;top:417.8px;width:3px;height:3px;background:#eeeef1"></div><div class="a" style="left:112.3px;top:411.8px;width:3px;height:3px;background:#ebebee"></div><div class="a" style="left:112.3px;top:414.8px;width:3px;height:3px;background:#cdcdd0"></div><div class="a" style="left:112.3px;top:417.8px;width:3px;height:3px;background:#efeff2"></div><div class="a" style="left:115.3px;top:411.8px;width:3px;height:3px;background:#f2f2f5"></div><div class="a" style="left:115.3px;top:414.8px;width:3px;height:3px;background:#b8b8bb"></div><div class="a" style="left:115.3px;top:417.8px;width:3px;height:3px;background:#f6f6f9"></div><div class="a" style="left:118.3px;top:411.8px;width:3px;height:3px;background:#f0dfc8"></div><div class="a" style="left:118.3px;top:414.8px;width:3px;height:3px;background:#e8a975"></div><div class="a" style="left:118.3px;top:417.8px;width:3px;height:3px;background:#e9d9b6"></div><div class="a" style="left:121.3px;top:411.8px;width:3px;height:3px;background:#ffe6db"></div><div class="a" style="left:121.3px;top:414.8px;width:3px;height:3px;background:#ed9874"></div><div class="a" style="left:121.3px;top:417.8px;width:3px;height:3px;background:#eacfb9"></div><div class="a" style="left:75.6px;top:425.7px;width:3px;height:3px;background:#ebebee"></div><div class="a" style="left:75.6px;top:428.7px;width:3px;height:3px;background:#cdcdd0"></div><div class="a" style="left:75.6px;top:431.7px;width:3px;height:3px;background:#f0f0f3"></div><div class="a" style="left:78.6px;top:425.7px;width:3px;height:3px;background:#ededf0"></div><div class="a" style="left:78.6px;top:428.7px;width:3px;height:3px;background:#dedee1"></div><div class="a" style="left:78.6px;top:431.7px;width:3px;height:3px;background:#e8e8eb"></div><div class="a" style="left:81.6px;top:425.7px;width:3px;height:3px;background:#ededf0"></div><div class="a" style="left:81.6px;top:428.7px;width:3px;height:3px;background:#e1e1e4"></div><div class="a" style="left:81.6px;top:431.7px;width:3px;height:3px;background:#eeeef1"></div><div class="a" style="left:84.6px;top:425.7px;width:3px;height:3px;background:#f8f8fb"></div><div class="a" style="left:84.6px;top:428.7px;width:3px;height:3px;background:#cdcdd0"></div><div class="a" style="left:84.6px;top:431.7px;width:3px;height:3px;background:#ebebee"></div><div class="a" style="left:87.6px;top:425.7px;width:3px;height:3px;background:#f5f5f8"></div><div class="a" style="left:87.6px;top:428.7px;width:3px;height:3px;background:#c0c0c3"></div><div class="a" style="left:87.6px;top:431.7px;width:3px;height:3px;background:#ececef"></div><div class="a" style="left:90.6px;top:425.7px;width:3px;height:3px;background:#f2f2f5"></div><div class="a" style="left:90.6px;top:428.7px;width:3px;height:3px;background:#b9b9bc"></div><div class="a" style="left:90.6px;top:431.7px;width:3px;height:3px;background:#f8f8fb"></div><div class="a" style="left:93.6px;top:425.7px;width:3px;height:3px;background:#f3f3f6"></div><div class="a" style="left:93.6px;top:428.7px;width:3px;height:3px;background:#b5b5b8"></div><div class="a" style="left:93.6px;top:431.7px;width:3px;height:3px;background:#ebebee"></div><div class="a" style="left:96.6px;top:425.7px;width:3px;height:3px;background:#f9f9fc"></div><div class="a" style="left:96.6px;top:428.7px;width:3px;height:3px;background:#d1d1d4"></div><div class="a" style="left:96.6px;top:431.7px;width:3px;height:3px;background:#efeff2"></div><div class="a" style="left:99.6px;top:425.7px;width:3px;height:3px;background:#e8e8eb"></div><div class="a" style="left:99.6px;top:428.7px;width:3px;height:3px;background:#cccccf"></div><div class="a" style="left:99.6px;top:431.7px;width:3px;height:3px;background:#ebebee"></div><div class="a" style="left:102.6px;top:425.7px;width:3px;height:3px;background:#f8f8fb"></div><div class="a" style="left:102.6px;top:428.7px;width:3px;height:3px;background:#dbdbde"></div><div class="a" style="left:102.6px;top:431.7px;width:3px;height:3px;background:#eaeaed"></div><div class="a" style="left:105.6px;top:425.7px;width:3px;height:3px;background:#f8f8fb"></div><div class="a" style="left:105.6px;top:428.7px;width:3px;height:3px;background:#b8b8bb"></div><div class="a" style="left:105.6px;top:431.7px;width:3px;height:3px;background:#e4e4e7"></div><div class="a" style="left:108.6px;top:425.7px;width:3px;height:3px;background:#efeff2"></div><div class="a" style="left:108.6px;top:428.7px;width:3px;height:3px;background:#bababd"></div><div class="a" style="left:108.6px;top:431.7px;width:3px;height:3px;background:#e3e3e6"></div><div class="a" style="left:111.6px;top:425.7px;width:3px;height:3px;background:#f0f0f3"></div><div class="a" style="left:111.6px;top:428.7px;width:3px;height:3px;background:#c5c5c8"></div><div class="a" style="left:111.6px;top:431.7px;width:3px;height:3px;background:#e2e2e5"></div><div class="a" style="left:114.6px;top:425.7px;width:3px;height:3px;background:#ffd7ce"></div><div class="a" style="left:114.6px;top:428.7px;width:3px;height:3px;background:#fa9879"></div><div class="a" style="left:114.6px;top:431.7px;width:3px;height:3px;background:#fbc9be"></div><div class="a" style="left:117.6px;top:425.7px;width:3px;height:3px;background:#ede3d6"></div><div class="a" style="left:117.6px;top:428.7px;width:3px;height:3px;background:#f4a382"></div><div class="a" style="left:117.6px;top:431.7px;width:3px;height:3px;background:#f0c3ba"></div><div class="a" style="left:69.5px;top:439.6px;width:3px;height:3px;background:#e9e9ec"></div><div class="a" style="left:69.5px;top:442.6px;width:3px;height:3px;background:#e0e0e3"></div><div class="a" style="left:69.5px;top:445.6px;width:3px;height:3px;background:#e6e6e9"></div><div class="a" style="left:72.5px;top:439.6px;width:3px;height:3px;background:#f5f5f8"></div><div class="a" style="left:72.5px;top:442.6px;width:3px;height:3px;background:#b8b8bb"></div><div class="a" style="left:72.5px;top:445.6px;width:3px;height:3px;background:#e9e9ec"></div><div class="a" style="left:75.5px;top:439.6px;width:3px;height:3px;background:#e8e8eb"></div><div class="a" style="left:75.5px;top:442.6px;width:3px;height:3px;background:#dcdcdf"></div><div class="a" style="left:75.5px;top:445.6px;width:3px;height:3px;background:#e3e3e6"></div><div class="a" style="left:78.5px;top:439.6px;width:3px;height:3px;background:#f0f0f3"></div><div class="a" style="left:78.5px;top:442.6px;width:3px;height:3px;background:#b9b9bc"></div><div class="a" style="left:78.5px;top:445.6px;width:3px;height:3px;background:#f4f4f7"></div><div class="a" style="left:81.5px;top:439.6px;width:3px;height:3px;background:#efeff2"></div><div class="a" style="left:81.5px;top:442.6px;width:3px;height:3px;background:#b8b8bb"></div><div class="a" style="left:81.5px;top:445.6px;width:3px;height:3px;background:#e9e9ec"></div><div class="a" style="left:84.5px;top:439.6px;width:3px;height:3px;background:#ebebee"></div><div class="a" style="left:84.5px;top:442.6px;width:3px;height:3px;background:#d1d1d4"></div><div class="a" style="left:84.5px;top:445.6px;width:3px;height:3px;background:#e1e1e4"></div><div class="a" style="left:87.5px;top:439.6px;width:3px;height:3px;background:#f2f2f5"></div><div class="a" style="left:87.5px;top:442.6px;width:3px;height:3px;background:#d7d7da"></div><div class="a" style="left:87.5px;top:445.6px;width:3px;height:3px;background:#eeeef1"></div><div class="a" style="left:90.5px;top:439.6px;width:3px;height:3px;background:#f0f0f3"></div><div class="a" style="left:90.5px;top:442.6px;width:3px;height:3px;background:#dbdbde"></div><div class="a" style="left:90.5px;top:445.6px;width:3px;height:3px;background:#e5e5e8"></div><div class="a" style="left:93.5px;top:439.6px;width:3px;height:3px;background:#e9e9ec"></div><div class="a" style="left:93.5px;top:442.6px;width:3px;height:3px;background:#d5d5d8"></div><div class="a" style="left:93.5px;top:445.6px;width:3px;height:3px;background:#f7f7fa"></div><div class="a" style="left:96.5px;top:439.6px;width:3px;height:3px;background:#efeff2"></div><div class="a" style="left:96.5px;top:442.6px;width:3px;height:3px;background:#bbbbbe"></div><div class="a" style="left:96.5px;top:445.6px;width:3px;height:3px;background:#e6e6e9"></div><div class="a" style="left:99.5px;top:439.6px;width:3px;height:3px;background:#f0f0f3"></div><div class="a" style="left:99.5px;top:442.6px;width:3px;height:3px;background:#b7b7ba"></div><div class="a" style="left:99.5px;top:445.6px;width:3px;height:3px;background:#e6e6e9"></div><div class="a" style="left:102.5px;top:439.6px;width:3px;height:3px;background:#eeeef1"></div><div class="a" style="left:102.5px;top:442.6px;width:3px;height:3px;background:#c7c7ca"></div><div class="a" style="left:102.5px;top:445.6px;width:3px;height:3px;background:#f5f5f8"></div><div class="a" style="left:105.5px;top:439.6px;width:3px;height:3px;background:#f1f1f4"></div><div class="a" style="left:105.5px;top:442.6px;width:3px;height:3px;background:#d5d5d8"></div><div class="a" style="left:105.5px;top:445.6px;width:3px;height:3px;background:#e7e7ea"></div><div class="a" style="left:108.5px;top:439.6px;width:3px;height:3px;background:#f1f1f4"></div><div class="a" style="left:108.5px;top:442.6px;width:3px;height:3px;background:#d0d0d3"></div><div class="a" style="left:108.5px;top:445.6px;width:3px;height:3px;background:#f1f1f4"></div><div class="a" style="left:111.5px;top:439.6px;width:3px;height:3px;background:#ededf0"></div><div class="a" style="left:111.5px;top:442.6px;width:3px;height:3px;background:#c5c5c8"></div><div class="a" style="left:111.5px;top:445.6px;width:3px;height:3px;background:#ececef"></div><div class="a" style="left:114.5px;top:439.6px;width:3px;height:3px;background:#e8e8eb"></div><div class="a" style="left:114.5px;top:442.6px;width:3px;height:3px;background:#c4c4c7"></div><div class="a" style="left:114.5px;top:445.6px;width:3px;height:3px;background:#e2e2e5"></div><div class="a" style="left:117.5px;top:439.6px;width:3px;height:3px;background:#e8e8eb"></div><div class="a" style="left:117.5px;top:442.6px;width:3px;height:3px;background:#b5b5b8"></div><div class="a" style="left:117.5px;top:445.6px;width:3px;height:3px;background:#f8f8fb"></div><div class="a" style="left:120.5px;top:439.6px;width:3px;height:3px;background:#f9e3cc"></div><div class="a" style="left:120.5px;top:442.6px;width:3px;height:3px;background:#f2a373"></div><div class="a" style="left:120.5px;top:445.6px;width:3px;height:3px;background:#f4c4c7"></div><div class="a" style="left:123.5px;top:439.6px;width:3px;height:3px;background:#fddfdb"></div><div class="a" style="left:123.5px;top:442.6px;width:3px;height:3px;background:#f1a578"></div><div class="a" style="left:123.5px;top:445.6px;width:3px;height:3px;background:#f6cac8"></div>
<div class="box" style="left:60px;top:462px;width:75px;height:20px"></div>
<svg class="a" style="left:70px;top:466px" width="12" height="12" viewBox="0 0 12 12"><rect x="0.5" y="0.5" width="7" height="7" fill="#f2f2f2" stroke="#777" stroke-width="0.9"/><rect x="3.5" y="4" width="7.5" height="7.3" fill="#fff" stroke="#777" stroke-width="0.9"/><path d="M5.2 7.6H9" stroke="#e8850f" stroke-width="1.6"/></svg>
<div class="a" style="left:83px;top:466px;font-size:7px;color:#333;font-weight:bold;letter-spacing:-0.7px;word-spacing:1.5px">자주묻는 질문</div>

<!-- right sidebar -->
<div class="box" style="left:927px;top:161px;width:75px;height:107px"></div>
<div class="a" style="left:933px;top:213px;width:62px;height:1px;background:#e6e6e6"></div>
<svg class="a" style="left:957px;top:170px" width="15" height="16" viewBox="0 0 15 16"><rect x="0.7" y="0.8" width="13" height="13.6" rx="1.2" fill="none" stroke="#333" stroke-width="1.2"/><rect x="2.6" y="2.6" width="9.2" height="3" fill="#fff" stroke="#444" stroke-width="0.9"/><circle cx="3.1" cy="8.3" r="1.35" fill="#e0600f"/><circle cx="6.7" cy="8.3" r="1.35" fill="#e0600f"/><circle cx="10.3" cy="8.3" r="1.35" fill="#e0600f"/><circle cx="3.1" cy="12" r="1.35" fill="#e0600f"/><circle cx="6.7" cy="12" r="1.35" fill="#e0600f"/><circle cx="10.3" cy="12" r="1.35" fill="#e0600f"/></svg>
<div class="a" style="left:927px;width:75px;text-align:center;top:189px;font-size:7px;line-height:9.5px;color:#333;letter-spacing:-0.6px">대출상환금<br>이자계산기</div>
<svg class="a" style="left:955px;top:222px" width="17" height="17" viewBox="0 0 17 17"><ellipse cx="6" cy="2.8" rx="5.3" ry="2.1" fill="none" stroke="#333" stroke-width="1.1"/><path d="M0.7 2.8V13Q0.7 15.2 6 15.2M11.3 2.8V7M0.7 6.2Q1 8.3 6 8.3M0.7 9.7Q1 11.8 6 11.8" fill="none" stroke="#333" stroke-width="1.1"/><circle cx="11" cy="11" r="3" fill="none" stroke="#e8600f" stroke-width="1.5"/><path d="M13.2 13.2L16 16" stroke="#e8600f" stroke-width="1.8"/></svg>
<div class="a" style="left:927px;width:75px;text-align:center;top:241px;font-size:7px;line-height:9.5px;color:#333;letter-spacing:-0.6px">등록대부업체<br>통합조회</div>
<div class="box" style="left:927px;top:271px;width:75px;height:182px"></div>
<div class="a" style="left:927px;width:75px;text-align:center;top:275px;font-size:7px;color:#333;letter-spacing:-0.25px">스폰서링크</div>
<div class="a" style="left:927px;top:288px;width:75px;height:82px;background:linear-gradient(180deg,#e6e6e6,#d9d9d9)"></div>
<div class="a" style="left:927px;top:370px;width:75px;height:82px;background:linear-gradient(180deg,#dbe5ee,#d3dee8)"></div>
<div class="a" style="left:942.0px;top:297.0px;width:3px;height:3px;background:#b7b7ba"></div><div class="a" style="left:942.0px;top:300.0px;width:3px;height:3px;background:#d6d6d9"></div><div class="a" style="left:945.0px;top:297.0px;width:3px;height:3px;background:#bfbfc2"></div><div class="a" style="left:945.0px;top:300.0px;width:3px;height:3px;background:#d4d4d7"></div><div class="a" style="left:948.0px;top:297.0px;width:3px;height:3px;background:#d7d7da"></div><div class="a" style="left:948.0px;top:300.0px;width:3px;height:3px;background:#d0d0d3"></div><div class="a" style="left:951.0px;top:297.0px;width:3px;height:3px;background:#c3c3c6"></div><div class="a" style="left:951.0px;top:300.0px;width:3px;height:3px;background:#dedee1"></div><div class="a" style="left:954.0px;top:297.0px;width:3px;height:3px;background:#adadb0"></div><div class="a" style="left:954.0px;top:300.0px;width:3px;height:3px;background:#d0d0d3"></div><div class="a" style="left:957.0px;top:297.0px;width:3px;height:3px;background:#aaaaad"></div><div class="a" style="left:957.0px;top:300.0px;width:3px;height:3px;background:#cccccf"></div><div class="a" style="left:960.0px;top:297.0px;width:3px;height:3px;background:#d2d2d5"></div><div class="a" style="left:960.0px;top:300.0px;width:3px;height:3px;background:#d8d8db"></div><div class="a" style="left:963.0px;top:297.0px;width:3px;height:3px;background:#c5c5c8"></div><div class="a" style="left:963.0px;top:300.0px;width:3px;height:3px;background:#d2d2d5"></div><div class="a" style="left:966.0px;top:297.0px;width:3px;height:3px;background:#adadb0"></div><div class="a" style="left:966.0px;top:300.0px;width:3px;height:3px;background:#cdcdd0"></div><div class="a" style="left:969.0px;top:297.0px;width:3px;height:3px;background:#d4d4d7"></div><div class="a" style="left:969.0px;top:300.0px;width:3px;height:3px;background:#e0e0e3"></div><div class="a" style="left:972.0px;top:297.0px;width:3px;height:3px;background:#cacacd"></div><div class="a" style="left:972.0px;top:300.0px;width:3px;height:3px;background:#dadadd"></div><div class="a" style="left:975.0px;top:297.0px;width:3px;height:3px;background:#d0d0d3"></div><div class="a" style="left:975.0px;top:300.0px;width:3px;height:3px;background:#d7d7da"></div><div class="a" style="left:978.0px;top:297.0px;width:3px;height:3px;background:#d6d6d9"></div><div class="a" style="left:978.0px;top:300.0px;width:3px;height:3px;background:#dadadd"></div><div class="a" style="left:981.0px;top:297.0px;width:3px;height:3px;background:#acacaf"></div><div class="a" style="left:981.0px;top:300.0px;width:3px;height:3px;background:#e5e5e8"></div><svg class="a" style="left:944px;top:312px" width="40" height="26" viewBox="0 0 40 26"><circle cx="31" cy="8" r="8" fill="#d2d2d2"/><rect x="2.5" y="7" width="2.5" height="15" fill="#2c2c2c"/><rect x="2.5" y="5" width="2.5" height="2" fill="#7fb8c8"/><path d="M5 22Q12 24 20 19" fill="none" stroke="#bbb" stroke-width="1"/><path d="M7 7H18M9 11H12M9 15H12" stroke="#e8600f" stroke-width="0.8" stroke-dasharray="1.5 1"/><path d="M8 20L22 12" stroke="#e8600f" stroke-width="1.3"/><rect x="23" y="3.5" width="11.5" height="13.5" fill="#2f3338"/><rect x="24.5" y="5" width="8.5" height="3" fill="#83c7d6"/><path d="M24.5 10H33M24.5 12.5H33M24.5 15H33" stroke="#9aa" stroke-width="1" stroke-dasharray="1.3 0.9"/><path d="M24 23Q26.5 19 29 22Q31 20 33.5 21Q36 19 38 22" fill="none" stroke="#2b7bb3" stroke-width="1.8"/></svg><div class="a" style="left:936.0px;top:342.0px;width:3px;height:3px;background:#a1a1a4"></div><div class="a" style="left:936.0px;top:345.0px;width:3px;height:3px;background:#828285"></div><div class="a" style="left:936.0px;top:348.0px;width:3px;height:3px;background:#bbbbbe"></div><div class="a" style="left:939.0px;top:342.0px;width:3px;height:3px;background:#b2b2b5"></div><div class="a" style="left:939.0px;top:345.0px;width:3px;height:3px;background:#78787b"></div><div class="a" style="left:939.0px;top:348.0px;width:3px;height:3px;background:#bababd"></div><div class="a" style="left:942.0px;top:342.0px;width:3px;height:3px;background:#adadb0"></div><div class="a" style="left:942.0px;top:345.0px;width:3px;height:3px;background:#8d8d90"></div><div class="a" style="left:942.0px;top:348.0px;width:3px;height:3px;background:#cdcdd0"></div><div class="a" style="left:945.0px;top:342.0px;width:3px;height:3px;background:#aaaaad"></div><div class="a" style="left:945.0px;top:345.0px;width:3px;height:3px;background:#87878a"></div><div class="a" style="left:945.0px;top:348.0px;width:3px;height:3px;background:#acacaf"></div><div class="a" style="left:948.0px;top:342.0px;width:3px;height:3px;background:#a9a9ac"></div><div class="a" style="left:948.0px;top:345.0px;width:3px;height:3px;background:#858588"></div><div class="a" style="left:948.0px;top:348.0px;width:3px;height:3px;background:#c0c0c3"></div><div class="a" style="left:951.0px;top:342.0px;width:3px;height:3px;background:#a1a1a4"></div><div class="a" style="left:951.0px;top:345.0px;width:3px;height:3px;background:#78787b"></div><div class="a" style="left:951.0px;top:348.0px;width:3px;height:3px;background:#bfbfc2"></div><div class="a" style="left:954.0px;top:342.0px;width:3px;height:3px;background:#aeaeb1"></div><div class="a" style="left:954.0px;top:345.0px;width:3px;height:3px;background:#7d7d80"></div><div class="a" style="left:954.0px;top:348.0px;width:3px;height:3px;background:#c8c8cb"></div><div class="a" style="left:957.0px;top:342.0px;width:3px;height:3px;background:#a7a7aa"></div><div class="a" style="left:957.0px;top:345.0px;width:3px;height:3px;background:#98989b"></div><div class="a" style="left:957.0px;top:348.0px;width:3px;height:3px;background:#d3d3d6"></div><div class="a" style="left:960.0px;top:342.0px;width:3px;height:3px;background:#a2a2a5"></div><div class="a" style="left:960.0px;top:345.0px;width:3px;height:3px;background:#87878a"></div><div class="a" style="left:960.0px;top:348.0px;width:3px;height:3px;background:#cacacd"></div><div class="a" style="left:963.0px;top:342.0px;width:3px;height:3px;background:#c7c7ca"></div><div class="a" style="left:963.0px;top:345.0px;width:3px;height:3px;background:#78787b"></div><div class="a" style="left:963.0px;top:348.0px;width:3px;height:3px;background:#afafb2"></div><div class="a" style="left:966.0px;top:342.0px;width:3px;height:3px;background:#a6a6a9"></div><div class="a" style="left:966.0px;top:345.0px;width:3px;height:3px;background:#acacaf"></div><div class="a" style="left:966.0px;top:348.0px;width:3px;height:3px;background:#afafb2"></div><div class="a" style="left:969.0px;top:342.0px;width:3px;height:3px;background:#9f9fa2"></div><div class="a" style="left:969.0px;top:345.0px;width:3px;height:3px;background:#919194"></div><div class="a" style="left:969.0px;top:348.0px;width:3px;height:3px;background:#cfcfd2"></div><div class="a" style="left:972.0px;top:342.0px;width:3px;height:3px;background:#98989b"></div><div class="a" style="left:972.0px;top:345.0px;width:3px;height:3px;background:#919194"></div><div class="a" style="left:972.0px;top:348.0px;width:3px;height:3px;background:#ababae"></div><div class="a" style="left:975.0px;top:342.0px;width:3px;height:3px;background:#a9a9ac"></div><div class="a" style="left:975.0px;top:345.0px;width:3px;height:3px;background:#8b8b8e"></div><div class="a" style="left:975.0px;top:348.0px;width:3px;height:3px;background:#d2d2d5"></div><div class="a" style="left:978.0px;top:342.0px;width:3px;height:3px;background:#a4a4a7"></div><div class="a" style="left:978.0px;top:345.0px;width:3px;height:3px;background:#7d7d80"></div><div class="a" style="left:978.0px;top:348.0px;width:3px;height:3px;background:#cfcfd2"></div><div class="a" style="left:981.0px;top:342.0px;width:3px;height:3px;background:#b7b7ba"></div><div class="a" style="left:981.0px;top:345.0px;width:3px;height:3px;background:#aeaeb1"></div><div class="a" style="left:981.0px;top:348.0px;width:3px;height:3px;background:#b3b3b6"></div><div class="a" style="left:984.0px;top:342.0px;width:3px;height:3px;background:#c0c0c3"></div><div class="a" style="left:984.0px;top:345.0px;width:3px;height:3px;background:#b1b1b4"></div><div class="a" style="left:984.0px;top:348.0px;width:3px;height:3px;background:#d7d7da"></div><div class="a" style="left:987.0px;top:342.0px;width:3px;height:3px;background:#c8c8cb"></div><div class="a" style="left:987.0px;top:345.0px;width:3px;height:3px;background:#b0b0b3"></div><div class="a" style="left:987.0px;top:348.0px;width:3px;height:3px;background:#d0d0d3"></div><div class="a" style="left:990.0px;top:342.0px;width:3px;height:3px;background:#aeaeb1"></div><div class="a" style="left:990.0px;top:345.0px;width:3px;height:3px;background:#a8a8ab"></div><div class="a" style="left:990.0px;top:348.0px;width:3px;height:3px;background:#bebec1"></div><div class="a" style="left:941px;top:354px;width:46px;height:12px;background:#f6f6f6;font-size:7px;line-height:12px;text-align:center;color:#333;letter-spacing:0.2px">바로가기 <span style="color:#e8600f;font-weight:bold">&gt;</span></div><div class="a" style="left:933.0px;top:379.5px;width:3px;height:3px;background:#c9cbcf"></div><div class="a" style="left:933.0px;top:382.5px;width:3px;height:3px;background:#c7c9cd"></div><div class="a" style="left:936.0px;top:379.5px;width:3px;height:3px;background:#bcbec2"></div><div class="a" style="left:936.0px;top:382.5px;width:3px;height:3px;background:#e5e7eb"></div><div class="a" style="left:939.0px;top:379.5px;width:3px;height:3px;background:#d3d5d9"></div><div class="a" style="left:939.0px;top:382.5px;width:3px;height:3px;background:#c7c9cd"></div><div class="a" style="left:942.0px;top:379.5px;width:3px;height:3px;background:#acaeb2"></div><div class="a" style="left:942.0px;top:382.5px;width:3px;height:3px;background:#dee0e4"></div><div class="a" style="left:945.0px;top:379.5px;width:3px;height:3px;background:#d2d4d8"></div><div class="a" style="left:945.0px;top:382.5px;width:3px;height:3px;background:#d9dbdf"></div><div class="a" style="left:948.0px;top:379.5px;width:3px;height:3px;background:#d6d8dc"></div><div class="a" style="left:948.0px;top:382.5px;width:3px;height:3px;background:#dee0e4"></div><div class="a" style="left:951.0px;top:379.5px;width:3px;height:3px;background:#b2b4b8"></div><div class="a" style="left:951.0px;top:382.5px;width:3px;height:3px;background:#dfe1e5"></div><div class="a" style="left:954.0px;top:379.5px;width:3px;height:3px;background:#caccd0"></div><div class="a" style="left:954.0px;top:382.5px;width:3px;height:3px;background:#e2e4e8"></div><div class="a" style="left:957.0px;top:379.5px;width:3px;height:3px;background:#abadb1"></div><div class="a" style="left:957.0px;top:382.5px;width:3px;height:3px;background:#e3e5e9"></div><div class="a" style="left:960.0px;top:379.5px;width:3px;height:3px;background:#d7d9dd"></div><div class="a" style="left:960.0px;top:382.5px;width:3px;height:3px;background:#ccced2"></div><div class="a" style="left:963.0px;top:379.5px;width:3px;height:3px;background:#afb1b5"></div><div class="a" style="left:963.0px;top:382.5px;width:3px;height:3px;background:#bfc1c5"></div><div class="a" style="left:966.0px;top:379.5px;width:3px;height:3px;background:#acaeb2"></div><div class="a" style="left:966.0px;top:382.5px;width:3px;height:3px;background:#c6c8cc"></div><div class="a" style="left:969.0px;top:379.5px;width:3px;height:3px;background:#d2d4d8"></div><div class="a" style="left:969.0px;top:382.5px;width:3px;height:3px;background:#d5d7db"></div><div class="a" style="left:972.0px;top:379.5px;width:3px;height:3px;background:#b0b2b6"></div><div class="a" style="left:972.0px;top:382.5px;width:3px;height:3px;background:#d6d8dc"></div><div class="a" style="left:975.0px;top:379.5px;width:3px;height:3px;background:#c6c8cc"></div><div class="a" style="left:975.0px;top:382.5px;width:3px;height:3px;background:#e1e3e7"></div><div class="a" style="left:978.0px;top:379.5px;width:3px;height:3px;background:#adafb3"></div><div class="a" style="left:978.0px;top:382.5px;width:3px;height:3px;background:#e6e8ec"></div><div class="a" style="left:981.0px;top:379.5px;width:3px;height:3px;background:#abadb1"></div><div class="a" style="left:981.0px;top:382.5px;width:3px;height:3px;background:#e6e8ec"></div><div class="a" style="left:984.0px;top:379.5px;width:3px;height:3px;background:#ccced2"></div><div class="a" style="left:984.0px;top:382.5px;width:3px;height:3px;background:#cdcfd3"></div><div class="a" style="left:987.0px;top:379.5px;width:3px;height:3px;background:#c9cbcf"></div><div class="a" style="left:987.0px;top:382.5px;width:3px;height:3px;background:#ced0d4"></div><div class="a" style="left:990.0px;top:379.5px;width:3px;height:3px;background:#aaacb0"></div><div class="a" style="left:990.0px;top:382.5px;width:3px;height:3px;background:#dbdde1"></div><svg class="a" style="left:950px;top:392px" width="30" height="26" viewBox="0 0 30 26"><path d="M1 6L6 2H22V22H6L1 24Z" fill="#e6e8ea"/><path d="M1 6H17V24H1Z" fill="#dcdfe2"/><rect x="13" y="5" width="15" height="19" rx="1.5" fill="#2d63b5"/><rect x="15" y="7" width="11" height="3" fill="#d5e3f5"/><path d="M15.5 13H25.5M15.5 16.5H25.5M15.5 20H25.5" stroke="#d5e3f5" stroke-width="1.6" stroke-dasharray="1.7 1.1"/></svg><div class="a" style="left:933.0px;top:422.5px;width:3px;height:3px;background:#bfc1c5"></div><div class="a" style="left:933.0px;top:425.5px;width:3px;height:3px;background:#727478"></div><div class="a" style="left:933.0px;top:428.5px;width:3px;height:3px;background:#c5c7cb"></div><div class="a" style="left:936.0px;top:422.5px;width:3px;height:3px;background:#aeb0b4"></div><div class="a" style="left:936.0px;top:425.5px;width:3px;height:3px;background:#737579"></div><div class="a" style="left:936.0px;top:428.5px;width:3px;height:3px;background:#cfd1d5"></div><div class="a" style="left:939.0px;top:422.5px;width:3px;height:3px;background:#adafb3"></div><div class="a" style="left:939.0px;top:425.5px;width:3px;height:3px;background:#727478"></div><div class="a" style="left:939.0px;top:428.5px;width:3px;height:3px;background:#c3c5c9"></div><div class="a" style="left:942.0px;top:422.5px;width:3px;height:3px;background:#9c9ea2"></div><div class="a" style="left:942.0px;top:425.5px;width:3px;height:3px;background:#a1a3a7"></div><div class="a" style="left:942.0px;top:428.5px;width:3px;height:3px;background:#a9abaf"></div><div class="a" style="left:945.0px;top:422.5px;width:3px;height:3px;background:#c2c4c8"></div><div class="a" style="left:945.0px;top:425.5px;width:3px;height:3px;background:#7e8084"></div><div class="a" style="left:945.0px;top:428.5px;width:3px;height:3px;background:#b4b6ba"></div><div class="a" style="left:948.0px;top:422.5px;width:3px;height:3px;background:#babcc0"></div><div class="a" style="left:948.0px;top:425.5px;width:3px;height:3px;background:#9ea0a4"></div><div class="a" style="left:948.0px;top:428.5px;width:3px;height:3px;background:#b2b4b8"></div><div class="a" style="left:951.0px;top:422.5px;width:3px;height:3px;background:#9a9ca0"></div><div class="a" style="left:951.0px;top:425.5px;width:3px;height:3px;background:#9d9fa3"></div><div class="a" style="left:951.0px;top:428.5px;width:3px;height:3px;background:#ced0d4"></div><div class="a" style="left:954.0px;top:422.5px;width:3px;height:3px;background:#a9abaf"></div><div class="a" style="left:954.0px;top:425.5px;width:3px;height:3px;background:#8d8f93"></div><div class="a" style="left:954.0px;top:428.5px;width:3px;height:3px;background:#bdbfc3"></div><div class="a" style="left:957.0px;top:422.5px;width:3px;height:3px;background:#909296"></div><div class="a" style="left:957.0px;top:425.5px;width:3px;height:3px;background:#8c8e92"></div><div class="a" style="left:957.0px;top:428.5px;width:3px;height:3px;background:#d0d2d6"></div><div class="a" style="left:960.0px;top:422.5px;width:3px;height:3px;background:#9ea0a4"></div><div class="a" style="left:960.0px;top:425.5px;width:3px;height:3px;background:#9fa1a5"></div><div class="a" style="left:960.0px;top:428.5px;width:3px;height:3px;background:#a7a9ad"></div><div class="a" style="left:963.0px;top:422.5px;width:3px;height:3px;background:#b3b5b9"></div><div class="a" style="left:963.0px;top:425.5px;width:3px;height:3px;background:#96989c"></div><div class="a" style="left:963.0px;top:428.5px;width:3px;height:3px;background:#ced0d4"></div><div class="a" style="left:966.0px;top:422.5px;width:3px;height:3px;background:#989a9e"></div><div class="a" style="left:966.0px;top:425.5px;width:3px;height:3px;background:#727478"></div><div class="a" style="left:966.0px;top:428.5px;width:3px;height:3px;background:#cbcdd1"></div><div class="a" style="left:969.0px;top:422.5px;width:3px;height:3px;background:#95979b"></div><div class="a" style="left:969.0px;top:425.5px;width:3px;height:3px;background:#838589"></div><div class="a" style="left:969.0px;top:428.5px;width:3px;height:3px;background:#b5b7bb"></div><div class="a" style="left:972.0px;top:422.5px;width:3px;height:3px;background:#b5b7bb"></div><div class="a" style="left:972.0px;top:425.5px;width:3px;height:3px;background:#9d9fa3"></div><div class="a" style="left:972.0px;top:428.5px;width:3px;height:3px;background:#d1d3d7"></div><div class="a" style="left:975.0px;top:422.5px;width:3px;height:3px;background:#9fa1a5"></div><div class="a" style="left:975.0px;top:425.5px;width:3px;height:3px;background:#95979b"></div><div class="a" style="left:975.0px;top:428.5px;width:3px;height:3px;background:#c9cbcf"></div><div class="a" style="left:978.0px;top:422.5px;width:3px;height:3px;background:#94969a"></div><div class="a" style="left:978.0px;top:425.5px;width:3px;height:3px;background:#6e7074"></div><div class="a" style="left:978.0px;top:428.5px;width:3px;height:3px;background:#c3c5c9"></div><div class="a" style="left:981.0px;top:422.5px;width:3px;height:3px;background:#8f9195"></div><div class="a" style="left:981.0px;top:425.5px;width:3px;height:3px;background:#8d8f93"></div><div class="a" style="left:981.0px;top:428.5px;width:3px;height:3px;background:#b6b8bc"></div><div class="a" style="left:984.0px;top:422.5px;width:3px;height:3px;background:#b7b9bd"></div><div class="a" style="left:984.0px;top:425.5px;width:3px;height:3px;background:#74767a"></div><div class="a" style="left:984.0px;top:428.5px;width:3px;height:3px;background:#d1d3d7"></div><div class="a" style="left:987.0px;top:422.5px;width:3px;height:3px;background:#999b9f"></div><div class="a" style="left:987.0px;top:425.5px;width:3px;height:3px;background:#999b9f"></div><div class="a" style="left:987.0px;top:428.5px;width:3px;height:3px;background:#c4c6ca"></div><div class="a" style="left:990.0px;top:422.5px;width:3px;height:3px;background:#9ea0a4"></div><div class="a" style="left:990.0px;top:425.5px;width:3px;height:3px;background:#9b9da1"></div><div class="a" style="left:990.0px;top:428.5px;width:3px;height:3px;background:#c6c8cc"></div><div class="a" style="left:993.0px;top:422.5px;width:3px;height:3px;background:#9ea0a4"></div><div class="a" style="left:993.0px;top:425.5px;width:3px;height:3px;background:#8b8d91"></div><div class="a" style="left:993.0px;top:428.5px;width:3px;height:3px;background:#c2c4c8"></div><div class="a" style="left:940px;top:434px;width:46px;height:12px;background:#f3f5f7;font-size:7px;line-height:12px;text-align:center;color:#333;letter-spacing:0.2px">바로가기 <span style="color:#e8600f;font-weight:bold">&gt;</span></div>

<!-- grid -->
<div id="grid"><div class="cell" style="left:-1.00px;top:-1px;width:57.22px;height:66px"><svg width="22" height="22" viewBox="0 0 22 22" style="left:17.1px;top:11px"><rect x="2.5" y="2.5" width="17" height="17" rx="1.8" stroke="#333" stroke-width="1.2" fill="none" stroke-width="1.4"/><path d="M2.5 4.3Q2.5 2.5 4.3 2.5H17.7Q19.5 2.5 19.5 4.3V6H2.5Z" fill="#e8600f"/><circle cx="6" cy="10.5" r="1.2" fill="#e8600f"/><circle cx="6" cy="14.5" r="1.2" fill="#e8600f"/><path d="M9 10.5H16.5M9 14.5H16.5" stroke="#333" stroke-width="1.3"/></svg><div class="cl" style="color:#f0702a">전체</div><div class="cn" style="color:#f0702a">3124</div></div><div class="cell" style="left:55.22px;top:-1px;width:57.22px;height:66px"><svg width="22" height="22" viewBox="0 0 22 22" style="left:17.1px;top:11px"><circle cx="11" cy="5" r="3.6" stroke="#333" stroke-width="1.2" fill="none"/><path d="M3.5 21V16Q3.5 11.5 8 10.5L11 14L14 10.5Q18.5 11.5 18.5 16V21Z" stroke="#333" stroke-width="1.2" fill="none"/><path d="M11 14V21M13 15.5H16" stroke="#333" stroke-width="1"/></svg><div class="cl">직장인대출</div><div class="cn">303</div></div><div class="cell" style="left:111.44px;top:-1px;width:57.22px;height:66px"><svg width="22" height="22" viewBox="0 0 22 22" style="left:17.1px;top:11px"><circle cx="11" cy="5.3" r="3.8" stroke="#333" stroke-width="1.2" fill="none"/><path d="M3.8 21V16.5Q3.8 10.5 11 10.5Q18.2 10.5 18.2 16.5V21Z" stroke="#333" stroke-width="1.2" fill="none"/></svg><div class="cl">무직자대출</div><div class="cn">274</div></div><div class="cell" style="left:167.67px;top:-1px;width:57.22px;height:66px"><svg width="22" height="22" viewBox="0 0 22 22" style="left:17.1px;top:11px"><path d="M6.2 14V7Q6.2 1.5 11 1.5Q15.8 1.5 15.8 7V14" stroke="#333" stroke-width="1.2" fill="none"/><ellipse cx="11" cy="8" rx="3.3" ry="4" stroke="#333" stroke-width="1.2" fill="none"/><path d="M2.5 21V18.5Q2.5 14.5 8 13.5L11 17.5L14 13.5Q19.5 14.5 19.5 18.5V21Z" stroke="#333" stroke-width="1.2" fill="none"/><path d="M8 4.5Q11 7 14 5.5" stroke="#333" stroke-width="1.2" fill="none"/></svg><div class="cl">여성대출</div><div class="cn">130</div></div><div class="cell" style="left:223.89px;top:-1px;width:57.22px;height:66px"><svg width="22" height="22" viewBox="0 0 22 22" style="left:17.1px;top:11px"><circle cx="11" cy="4" r="3.2" stroke="#333" stroke-width="1.2" fill="none"/><path d="M10.3 2.5H12M10 4H12M10.3 5.5H12" stroke="#333" stroke-width="0.6"/><path d="M1.5 11L4.5 9.5L6.5 16L3.5 17.5Z M20.5 11L17.5 9.5L15.5 16L18.5 17.5Z" stroke="#333" stroke-width="1.2" fill="none"/><path d="M5 11Q8 10 11 10.5L14 10Q16.5 10.5 17.5 11M6 15.5L11 19.5Q12.5 20 13.5 19L16 15.5M11 10.5L8.5 13Q9.5 14 12 12.5L15 15" stroke="#333" stroke-width="1.2" fill="none"/></svg><div class="cl">개인돈대출</div><div class="cn">269</div></div><div class="cell" style="left:280.11px;top:-1px;width:57.22px;height:66px"><svg width="22" height="22" viewBox="0 0 22 22" style="left:17.1px;top:11px"><circle cx="11" cy="11" r="9.5" stroke="#333" stroke-width="1.2" fill="none" stroke-width="1.3"/><circle cx="11" cy="11" r="7.3" stroke="#333" stroke-width="1.2" fill="none"/><path d="M10.5 6V11L14 14.5" stroke="#333" stroke-width="1.2" fill="none" stroke-width="1.3"/></svg><div class="cl">연체자대출</div><div class="cn">134</div></div><div class="cell" style="left:336.33px;top:-1px;width:57.22px;height:66px"><svg width="22" height="22" viewBox="0 0 22 22" style="left:17.1px;top:11px"><ellipse cx="8" cy="3.8" rx="5" ry="2.3" stroke="#333" stroke-width="1.2" fill="none"/><path d="M3 3.8V13.5Q3 15.8 8 15.8M13 3.8V8M3 7.1Q3.5 9.4 8 9.4Q11 9.4 12.5 8.5M3 10.3Q3.5 12.6 8 12.6" stroke="#333" stroke-width="1.2" fill="none"/><circle cx="14.5" cy="15" r="5.2" stroke="#333" stroke-width="1.2" fill="none"/><text x="14.5" y="17.8" font-size="7.5" text-anchor="middle" fill="#333" font-family="Liberation Sans">$</text></svg><div class="cl">소액대출</div><div class="cn">237</div></div><div class="cell" style="left:392.56px;top:-1px;width:57.22px;height:66px"><svg width="22" height="22" viewBox="0 0 22 22" style="left:17.1px;top:11px"><path d="M6 6.5V2.5H16V6.5" stroke="#333" stroke-width="1.2" fill="none"/><path d="M5.5 15.5H3.5Q2 15.5 2 14V8.5Q2 6.5 4 6.5H18Q20 6.5 20 8.5V14Q20 15.5 18.5 15.5H16.5" stroke="#333" stroke-width="1.2" fill="none"/><rect x="5.5" y="11.5" width="11" height="8" stroke="#333" stroke-width="1.2" fill="none"/><path d="M8 14.5H14M8 17H14" stroke="#333" stroke-width="1"/></svg><div class="cl">무방문대출</div><div class="cn">315</div></div><div class="cell" style="left:448.78px;top:-1px;width:57.22px;height:66px"><svg width="22" height="22" viewBox="0 0 22 22" style="left:17.1px;top:11px"><rect x="2.5" y="4" width="17" height="15.5" rx="1.2" stroke="#333" stroke-width="1.2" fill="none"/><path d="M2.5 17.5H19.5M7 2V5.5M15 2V5.5" stroke="#333" stroke-width="1.2" fill="none"/><text x="11" y="14.3" font-size="7.5" font-weight="bold" text-anchor="middle" fill="#333" font-family="Liberation Sans">31</text></svg><div class="cl">월변대출</div><div class="cn">251</div></div><div class="cell" style="left:-1.00px;top:64px;width:57.22px;height:66px"><svg width="22" height="22" viewBox="0 0 22 22" style="left:17.1px;top:11px"><path d="M3 9.5Q2 10.5 3.5 13Q7 18 11 20Q13 20.7 14 19.5L15.2 18.3L12.5 15.5L11 17Q8 15 6.5 11.5L8 10L5.5 7.5Z" stroke="#333" stroke-width="1.2" fill="none"/><path d="M9 1.5H19.5V10H15L13.5 11.8L13 10H9Z" stroke="#333" stroke-width="1.2" fill="none"/><text x="14.3" y="8.4" font-size="6.2" font-weight="bold" text-anchor="middle" fill="#333" font-family="Liberation Sans">24</text></svg><div class="cl">당일대출</div><div class="cn">312</div></div><div class="cell" style="left:55.22px;top:64px;width:57.22px;height:66px"><svg width="22" height="22" viewBox="0 0 22 22" style="left:17.1px;top:11px"><path d="M11 2.5L19.5 6V17L11 20.5L2.5 17V6Z M2.5 6L11 9.5L19.5 6 M11 9.5V20.5" stroke="#333" stroke-width="1.2" fill="none"/><path d="M4.5 18V10.5L7.5 11.8V19.2" stroke="#333" stroke-width="1.2" fill="none"/><path d="M6 11.2V18.6" stroke="#333" stroke-width="0.8"/></svg><div class="cl">사업자대출</div><div class="cn">93</div></div><div class="cell" style="left:111.44px;top:64px;width:57.22px;height:66px"><svg width="22" height="22" viewBox="0 0 22 22" style="left:17.1px;top:11px"><rect x="2.5" y="4" width="17" height="15.5" rx="1.2" stroke="#333" stroke-width="1.2" fill="none"/><path d="M2.5 17.5H19.5M7 2V5.5M15 2V5.5" stroke="#333" stroke-width="1.2" fill="none"/><text x="11" y="14.3" font-size="7.5" font-weight="bold" text-anchor="middle" fill="#333" font-family="Liberation Sans">1</text></svg><div class="cl">일수대출</div><div class="cn">61</div></div><div class="cell" style="left:167.67px;top:64px;width:57.22px;height:66px"><svg width="22" height="22" viewBox="0 0 22 22" style="left:17.1px;top:11px"><path d="M4 1.5V19.5M1 16.5L4 19.5L7 16.5" stroke="#333" stroke-width="1.2" fill="none"/><rect x="9.5" y="1.5" width="11" height="18" stroke="#333" stroke-width="1.2" fill="none"/><circle cx="15" cy="8" r="2" stroke="#333" stroke-width="1.2" fill="none"/><path d="M11.8 14Q11.8 11 15 11Q18.2 11 18.2 14Z" stroke="#333" stroke-width="1.2" fill="none"/></svg><div class="cl">저신용자대출</div><div class="cn">64</div></div><div class="cell" style="left:223.89px;top:64px;width:57.22px;height:66px"><svg width="22" height="22" viewBox="0 0 22 22" style="left:17.1px;top:11px"><path d="M4 20.5V2.5M1 5.5L4 2.5L7 5.5" stroke="#333" stroke-width="1.2" fill="none"/><rect x="9.5" y="2.5" width="11" height="18" stroke="#333" stroke-width="1.2" fill="none"/><circle cx="15" cy="9" r="2" stroke="#333" stroke-width="1.2" fill="none"/><path d="M11.8 15Q11.8 12 15 12Q18.2 12 18.2 15Z" stroke="#333" stroke-width="1.2" fill="none"/></svg><div class="cl">신용대출</div><div class="cn">25</div></div><div class="cell" style="left:280.11px;top:64px;width:57.22px;height:66px"><svg width="22" height="22" viewBox="0 0 22 22" style="left:17.1px;top:11px"><path d="M7 6Q2 11 2 16Q2 20 7 20H11M12 6.5Q14 8 15 11" stroke="#333" stroke-width="1.2" fill="none"/><path d="M6 1.5L8 3.5L9.5 1.5L11 3.5L13 1.5L12 6H7.5Z" stroke="#333" stroke-width="1.2" fill="none"/><circle cx="15.5" cy="15.5" r="4.5" stroke="#333" stroke-width="1.2" fill="none"/><path d="M15.5 13V18M13 15.5H18" stroke="#333" stroke-width="1.3"/></svg><div class="cl">추가대출</div><div class="cn">23</div></div><div class="cell" style="left:336.33px;top:64px;width:57.22px;height:66px"><svg width="22" height="22" viewBox="0 0 22 22" style="left:17.1px;top:11px"><path d="M5 6.5L6 3.5Q6.5 2 8 2H14Q15.5 2 16 3.5L17 6.5" stroke="#333" stroke-width="1.2" fill="none"/><path d="M3.5 17V9Q3.5 6.5 6 6.5H16Q18.5 6.5 18.5 9V17Z" stroke="#333" stroke-width="1.2" fill="none"/><path d="M1.5 7.5H3.5M18.5 7.5H20.5M3.5 10.5H18.5" stroke="#333" stroke-width="1.2" fill="none"/><circle cx="7" cy="13" r="1.3" stroke="#333" stroke-width="1.2" fill="none"/><circle cx="15" cy="13" r="1.3" stroke="#333" stroke-width="1.2" fill="none"/><path d="M5 17V19.5H8V17M14 17V19.5H17V17" stroke="#333" stroke-width="1.2" fill="none"/></svg><div class="cl">자동차대출</div><div class="cn">15</div></div><div class="cell" style="left:392.56px;top:64px;width:57.22px;height:66px"><svg width="22" height="22" viewBox="0 0 22 22" style="left:17.1px;top:11px"><path d="M1.5 11L11 3L20.5 11" stroke="#333" stroke-width="1.2" fill="none" stroke-width="1.4"/><path d="M15 6.5V2H17.5V8.5" stroke="#333" stroke-width="1.2" fill="none"/><path d="M4 9V19.5H18V9" stroke="#333" stroke-width="1.2" fill="none"/><path d="M8.5 19.5V12.5H13.5V19.5" stroke="#333" stroke-width="1.2" fill="none"/></svg><div class="cl">부동산대출</div><div class="cn">8</div></div><div class="cell" style="left:448.78px;top:64px;width:57.22px;height:66px"><svg width="22" height="22" viewBox="0 0 22 22" style="left:17.1px;top:11px"><path d="M11 20A9 9 0 1 1 20 11" stroke="#333" stroke-width="1.2" fill="none" stroke-width="1.3"/><path d="M11 4V5.5M4 11H5.5M6 6L7 7" stroke="#333" stroke-width="0.8"/><path d="M10 7.5L10 10.5L12.5 13" stroke="#333" stroke-width="1.2" fill="none"/><text x="15.5" y="20.5" font-size="6.5" font-weight="bold" text-anchor="middle" fill="#333" font-family="Liberation Sans">24</text></svg><div class="cl">24시대출</div><div class="cn">154</div></div><div class="cell" style="left:-1.00px;top:129px;width:57.22px;height:66px"><svg width="22" height="22" viewBox="0 0 22 22" style="left:17.1px;top:11px"><circle cx="16.2" cy="10.4" r="8.6" stroke="#333" stroke-width="1.2" fill="none" stroke-width="1.3"/><text x="16.2" y="13.6" font-size="9" text-anchor="middle" fill="#333" font-family="Liberation Sans">$</text><path d="M-0.2 1.7H15M-3 4.5H10M-0.2 7.8H8.2M2.9 11H7.4M4.9 13.2H7.6" stroke="#333" stroke-width="1.1"/></svg><div class="cl">급전대출</div><div class="cn">157</div></div><div class="cell" style="left:55.22px;top:129px;width:57.22px;height:66px"><svg width="22" height="22" viewBox="0 0 22 22" style="left:17.1px;top:11px"><ellipse cx="12.6" cy="8.3" rx="4.6" ry="5.4" stroke="#333" stroke-width="1.2" fill="none"/><path d="M8 7.5Q7 3 6.8 -0.3Q9 1 12 1Q17 1 17.4 5.5L17.2 7.5Q15 4.5 12 5Q9.5 5.5 8 7.5Z" fill="#333"/><path d="M10.5 13.5V15.5L12.6 17.2L14.7 15.5V13.5" stroke="#333" stroke-width="1.2" fill="none"/><path d="M3.6 20.8V18.3Q3.6 15 9 14.6M16.2 14.6Q21.6 15 21.6 18.3V20.8H3.6" stroke="#333" stroke-width="1.2" fill="none"/></svg><div class="cl">일용직대출</div><div class="cn">68</div></div><div class="cell" style="left:111.44px;top:129px;width:57.22px;height:66px"><svg width="22" height="22" viewBox="0 0 22 22" style="left:17.1px;top:11px"><rect x="3.7" y="0.9" width="15.6" height="18.7" rx="1.6" stroke="#333" stroke-width="1.2" fill="none" stroke-width="1.3"/><path d="M6.8 4H13.5M6.8 5.9H13.5M6.8 7.8H12M6.8 9.7H11M6.8 11.6H11M6.8 13.5H11M6.8 15.4H12M6.8 17.3H13.5" stroke="#333" stroke-width="1"/><circle cx="19" cy="9.9" r="6.3" fill="#fff" stroke="#333" stroke-width="1.3"/><path d="M19.2 6.5V10.2H21.3" stroke="#333" stroke-width="1.2" fill="none" stroke-width="1.2"/></svg><div class="cl">프리랜서대출</div><div class="cn">42</div></div><div class="cell" style="left:167.67px;top:129px;width:57.22px;height:66px"><svg width="22" height="22" viewBox="0 0 22 22" style="left:17.1px;top:11px"><path d="M4 5.5L6 3.5H10L12 5.5L8 10Z M4 5.5H12" stroke="#333" stroke-width="1.2" fill="none"/><path d="M6 10Q4.5 11 4.5 13M10 10Q11.5 11 11.5 13" stroke="#333" stroke-width="1.2" fill="none"/><path d="M13 14V3Q13 1.5 14.5 1.5H16Q17.5 1.5 17.5 3V13Q17.5 14.5 16 14.5" stroke="#333" stroke-width="1.2" fill="none"/><path d="M2 13H15Q16 13 16 14V19.5Q16 20.5 15 20.5H3Q2 20.5 2 19.5V14Q2 13 3 13" stroke="#333" stroke-width="1.2" fill="none"/></svg><div class="cl">전당포대출</div><div class="cn">8</div></div><div class="cell" style="left:223.89px;top:129px;width:57.22px;height:66px"><svg width="22" height="22" viewBox="0 0 22 22" style="left:17.1px;top:11px"><path d="M1.5 8.5L8 4L21 11L14 15.5Z" stroke="#333" stroke-width="1.2" fill="none"/><path d="M1.5 8.5V10.5L14 17.5L21 13M1.5 11V13L14 20L21 15.5" stroke="#333" stroke-width="1.2" fill="none"/><path d="M7 5L13 9L11.5 19.5" stroke="#333" stroke-width="1.4" fill="none"/></svg><div class="cl">신불자대출</div><div class="cn">69</div></div><div class="cell" style="left:280.11px;top:129px;width:57.22px;height:66px"><svg width="22" height="22" viewBox="0 0 22 22" style="left:17.1px;top:11px"><ellipse cx="11" cy="3.3" rx="3" ry="2" stroke="#333" stroke-width="1.2" fill="none"/><path d="M7 11V7.5Q7 4.5 11 4.5Q15 4.5 15 7.5V11" stroke="#333" stroke-width="1.2" fill="none"/><path d="M8.5 6.5Q8.5 12 11 12.5Q13.5 12 13.5 6.5" stroke="#333" stroke-width="1.2" fill="none"/><path d="M2.5 21V17.5Q2.5 14 8 13.5L11 17.5L14 13.5Q19.5 14 19.5 17.5V21Z" stroke="#333" stroke-width="1.2" fill="none"/></svg><div class="cl">주부대출</div><div class="cn">52</div></div><div class="cell" style="left:336.33px;top:129px;width:57.22px;height:66px"><svg width="22" height="22" viewBox="0 0 22 22" style="left:17.1px;top:11px"><path d="M10 4.5Q5 4 4 8L2 9V12.5L4 13.5Q5 16 7 16.5V19H9V17.5H14V19H16V16Q19.5 14 19.5 10.5Q19.5 5.5 14.5 4.5" stroke="#333" stroke-width="1.2" fill="none"/><path d="M4.5 6.5L4 3.5L7 4.8M10 4.5L8.5 8L12 10L10.5 14.5M12.5 3.5L11.5 7.5" stroke="#333" stroke-width="1.2" fill="none"/><circle cx="6.5" cy="9" r="0.7" fill="#333"/><path d="M19.5 10.5Q20.5 10.5 20.5 9.5" stroke="#333" stroke-width="1.2" fill="none"/></svg><div class="cl">회생파산대출</div><div class="cn">25</div></div><div class="cell" style="left:392.56px;top:129px;width:57.22px;height:66px"><svg width="22" height="22" viewBox="0 0 22 22" style="left:17.1px;top:11px"><g transform="translate(12.3 9.5) rotate(-45)"><path d="M-3 -11L3.2 -4.8H0.4V8H-6.4V-4.8H-9.2Z" fill="#fff" stroke="#333" stroke-width="1.2" stroke-linejoin="miter"/><path d="M3 11L9.2 4.8H6.4V-8H-0.4V4.8H-3.2Z" fill="#fff" stroke="#333" stroke-width="1.2" stroke-linejoin="miter"/></g></svg><div class="cl">대환대출</div><div class="cn">21</div></div><div class="cell" style="left:448.78px;top:129px;width:57.22px;height:66px"><svg width="22" height="22" viewBox="0 0 22 22" style="left:17.1px;top:11px"><circle cx="11" cy="11" r="9.3" stroke="#333" stroke-width="1.2" fill="none" stroke-width="1.3"/><circle cx="7.5" cy="11.5" r="1.4" stroke="#333" stroke-width="1.2" fill="none"/><circle cx="11" cy="11.5" r="1.4" stroke="#333" stroke-width="1.2" fill="none"/><circle cx="14.5" cy="11.5" r="1.4" stroke="#333" stroke-width="1.2" fill="none"/></svg><div class="cl">기타대출</div><div class="cn">14</div></div><div style="position:absolute;left:-1px;top:-1px;width:58px;height:66px;border:1px solid #f37a3a"></div></div>

<div class="a" style="left:733px;top:360px;font-size:9px;color:#777;letter-spacing:-0.57px">&#9432;상품별로 업체를 선택하여 보실 수 있습니다.</div>

<!-- section -->
<div class="a" style="left:157px;top:396px;font-size:9px;color:#444;letter-spacing:-0.75px"><span style="color:#e8600f">&bull;</span> 배너위치는 실시간으로 랜덤 배치됩니다.</div>
<div class="a" style="left:470px;top:389px;font-size:14px;font-weight:bold;color:#222;letter-spacing:-1.3px"><span style="color:#e8600f">상품별</span> 업체 등록 현황</div>
<div class="box" style="left:842px;top:387px;width:63px;height:20px;border-color:#d5d5d5"></div>
<div class="a" style="left:849px;top:391px;font-size:9px;color:#555;letter-spacing:-0.4px">광고문의</div>
<svg class="a" style="left:887px;top:391px" width="11" height="11" viewBox="0 0 11 11"><circle cx="5.5" cy="5.5" r="5" fill="#8a8a8a"/><text x="5.5" y="8.8" font-size="8.5" font-weight="bold" fill="#fff" text-anchor="middle" font-family="Liberation Sans">?</text></svg>

<div class="card" style="left:156px"><svg class="ci" width="144" height="66" viewBox="0 0 144 66"><defs><filter id="bl"><feGaussianBlur stdDeviation="2"/></filter><filter id="bl2"><feGaussianBlur stdDeviation="0.8"/></filter></defs><g filter="url(#bl2)"><rect width="144" height="66" fill="#7b93aa"/><ellipse cx="22" cy="14" rx="30" ry="18" fill="#cdd6de" opacity="0.9" filter="url(#bl)"/><ellipse cx="40" cy="32" rx="14" ry="8" fill="#b9c4ce" opacity="0.8" filter="url(#bl)"/><path d="M92 0H144V20L128 66H100Q104 30 92 0Z" fill="#3f5f7e"/><path d="M98 0L108 66M106 0L116 60M114 0L122 48M122 0L130 36M130 0L136 26" stroke="#8fb0cc" stroke-width="1" opacity="0.8"/><ellipse cx="136" cy="20" rx="10" ry="14" fill="#d6dee5" opacity="0.8" filter="url(#bl)"/><path d="M118 66Q126 44 144 38V66Z" fill="#b9c2ca"/><path d="M0 38L34 30L56 66H0Z" fill="#44535f"/><path d="M4 44L34 36M6 52L40 44M8 60L46 52M20 40L32 66" stroke="#b7c3cd" stroke-width="1.4" opacity="0.9"/><path d="M70 40L84 34L90 66H72Z" fill="#5d6a76"/><ellipse cx="62" cy="58" rx="16" ry="9" fill="#d3dae0" opacity="0.85" filter="url(#bl)"/></g><rect width="144" height="66" fill="#000" opacity="0.16"/></svg><div class="ct">직장인 대출</div><div class="cb1">서울 경기인천지역<br>간편상담</div><div class="hr" style="top:118px"></div><div class="ph"><svg width="10" height="10" viewBox="0 0 10 10" style="vertical-align:-1px;margin-right:3px"><path d="M1 1.5Q0 2.5 1.5 5Q3.5 8 6.5 9.3Q8 9.8 8.8 8.8L9.5 8L7.5 6L6.5 7Q4.5 6 3.5 3.5L4.5 2.5L2.5 0.5Z" fill="#333"/></svg>010-1234-5678</div><div class="hr" style="top:145px"></div><svg width="9" height="9" viewBox="0 0 10 11" style="position:absolute;left:8px;top:157px"><circle cx="5" cy="3" r="2.7" fill="#e8600f"/><path d="M0 11Q0 6 5 6Q10 6 10 11Z" fill="#e8600f"/></svg><div class="a" style="left:19px;top:155px;font-size:8px;color:#e8600f;letter-spacing:-0.8px">대출나라</div><div class="a" style="right:8px;top:155px;font-size:9px;color:#e8600f;letter-spacing:-0.8px">전국</div></div><div class="card" style="left:307px"><svg class="ci" width="144" height="66" viewBox="0 0 144 66"><defs><filter id="bl"><feGaussianBlur stdDeviation="2"/></filter><filter id="bl2"><feGaussianBlur stdDeviation="0.8"/></filter></defs><g filter="url(#bl2)"><rect width="144" height="66" fill="#bdbbb7"/><rect x="0" y="0" width="70" height="36" fill="#cfcdc9"/><path d="M5 10H40M5 16H30M5 22H36" stroke="#b0aea9" stroke-width="2" opacity="0.7"/><path d="M98 0H144V52H106Q96 25 98 0Z" fill="#e8e6e2"/><path d="M118 0V42" stroke="#a9a7a3" stroke-width="2"/><path d="M0 66V52Q30 42 60 44L144 48V66Z" fill="#d8d6d1"/><path d="M42 56L92 44L132 52L82 64Z" fill="#f2f1ee"/><ellipse cx="36" cy="46" rx="24" ry="7" fill="#4e4a46" filter="url(#bl)"/><rect x="0" y="58" width="40" height="8" fill="#7a7672" opacity="0.7"/></g><rect width="144" height="66" fill="#000" opacity="0.22"/></svg><div class="ct">직장인 대출</div><div class="cb1">서울 경기인천지역<br>간편상담</div><div class="hr" style="top:118px"></div><div class="ph"><svg width="10" height="10" viewBox="0 0 10 10" style="vertical-align:-1px;margin-right:3px"><path d="M1 1.5Q0 2.5 1.5 5Q3.5 8 6.5 9.3Q8 9.8 8.8 8.8L9.5 8L7.5 6L6.5 7Q4.5 6 3.5 3.5L4.5 2.5L2.5 0.5Z" fill="#333"/></svg>010-1234-5678</div><div class="hr" style="top:145px"></div><svg width="9" height="9" viewBox="0 0 10 11" style="position:absolute;left:8px;top:157px"><circle cx="5" cy="3" r="2.7" fill="#e8600f"/><path d="M0 11Q0 6 5 6Q10 6 10 11Z" fill="#e8600f"/></svg><div class="a" style="left:19px;top:155px;font-size:8px;color:#e8600f;letter-spacing:-0.8px">대출나라</div><div class="a" style="right:8px;top:155px;font-size:9px;color:#e8600f;letter-spacing:-0.8px">전국</div></div><div class="card" style="left:458px"><svg class="ci" width="144" height="66" viewBox="0 0 144 66"><defs><filter id="bl"><feGaussianBlur stdDeviation="2"/></filter><filter id="bl2"><feGaussianBlur stdDeviation="0.8"/></filter></defs><g filter="url(#bl2)"><rect width="144" height="66" fill="#b5b6ad"/><rect x="0" y="0" width="40" height="66" fill="#cfd0c6"/><ellipse cx="72" cy="12" rx="14" ry="12" fill="#6e7d5c" filter="url(#bl)"/><path d="M34 32Q34 24 44 24H124Q138 24 138 34V52H34Z" fill="#7f887a"/><path d="M34 50H144V60H34Z" fill="#8f9588"/><path d="M20 36H46V56H20Z" fill="#3e3e3e"/><path d="M14 56H60L54 62H10Z" fill="#666"/><rect x="0" y="60" width="144" height="6" fill="#a39a8c"/><rect x="58" y="46" width="16" height="6" fill="#e8e8e4"/></g><rect width="144" height="66" fill="#000" opacity="0.12"/></svg><div class="ct">직장인 대출</div><div class="cb1">서울 경기인천지역<br>간편상담</div><div class="hr" style="top:118px"></div><div class="ph"><svg width="10" height="10" viewBox="0 0 10 10" style="vertical-align:-1px;margin-right:3px"><path d="M1 1.5Q0 2.5 1.5 5Q3.5 8 6.5 9.3Q8 9.8 8.8 8.8L9.5 8L7.5 6L6.5 7Q4.5 6 3.5 3.5L4.5 2.5L2.5 0.5Z" fill="#333"/></svg>010-1234-5678</div><div class="hr" style="top:145px"></div><svg width="9" height="9" viewBox="0 0 10 11" style="position:absolute;left:8px;top:157px"><circle cx="5" cy="3" r="2.7" fill="#e8600f"/><path d="M0 11Q0 6 5 6Q10 6 10 11Z" fill="#e8600f"/></svg><div class="a" style="left:19px;top:155px;font-size:8px;color:#e8600f;letter-spacing:-0.8px">대출나라</div><div class="a" style="right:8px;top:155px;font-size:9px;color:#e8600f;letter-spacing:-0.8px">전국</div></div><div class="card" style="left:609px"><svg class="ci" width="144" height="66" viewBox="0 0 144 66"><defs><filter id="bl"><feGaussianBlur stdDeviation="2"/></filter><filter id="bl2"><feGaussianBlur stdDeviation="0.8"/></filter></defs><g filter="url(#bl2)"><rect width="144" height="66" fill="#e0d6c8"/><path d="M0 0H62Q76 30 72 66H0Z" fill="#cbd0d6"/><path d="M0 0H28Q38 30 28 66H0Z" fill="#b6bcc3"/><path d="M62 0H144V66H112Q122 30 62 0Z" fill="#ede5d9"/><path d="M86 0H112L122 66H92Z" fill="#f5f0e8" opacity="0.7"/><ellipse cx="90" cy="48" rx="22" ry="9" fill="#e2c2a8" filter="url(#bl)"/><path d="M0 50Q40 55 60 66H0Z" fill="#b9b3aa"/></g><rect width="144" height="66" fill="#000" opacity="0.2"/></svg><div class="ct">직장인 대출</div><div class="cb1">서울 경기인천지역<br>간편상담</div><div class="hr" style="top:118px"></div><div class="ph"><svg width="10" height="10" viewBox="0 0 10 10" style="vertical-align:-1px;margin-right:3px"><path d="M1 1.5Q0 2.5 1.5 5Q3.5 8 6.5 9.3Q8 9.8 8.8 8.8L9.5 8L7.5 6L6.5 7Q4.5 6 3.5 3.5L4.5 2.5L2.5 0.5Z" fill="#333"/></svg>010-1234-5678</div><div class="hr" style="top:145px"></div><svg width="9" height="9" viewBox="0 0 10 11" style="position:absolute;left:8px;top:157px"><circle cx="5" cy="3" r="2.7" fill="#e8600f"/><path d="M0 11Q0 6 5 6Q10 6 10 11Z" fill="#e8600f"/></svg><div class="a" style="left:19px;top:155px;font-size:8px;color:#e8600f;letter-spacing:-0.8px">대출나라</div><div class="a" style="right:8px;top:155px;font-size:9px;color:#e8600f;letter-spacing:-0.8px">전국</div></div><div class="card" style="left:760px"><svg class="ci" width="144" height="66" viewBox="0 0 144 66"><defs><filter id="bl"><feGaussianBlur stdDeviation="2"/></filter><filter id="bl2"><feGaussianBlur stdDeviation="0.8"/></filter></defs><g filter="url(#bl2)"><rect width="144" height="66" fill="#cdbda8"/><path d="M0 0H144V12H0Z" fill="#8d877f"/><path d="M10 0H50L46 8H12Z" fill="#2e2e2e"/><path d="M85 0H144V10L120 14Z" fill="#3a3a3a"/><path d="M0 18H22V42H0Z" fill="#f0f0ee"/><path d="M44 30L92 24L114 58L66 66H50Z" fill="#f3f2ef"/><path d="M92 34L104 56" stroke="#555" stroke-width="1.5" stroke-dasharray="2 2"/><path d="M122 40L144 30V66H112Z" fill="#9c8266"/><ellipse cx="120" cy="22" rx="12" ry="7" fill="#6f8c52" filter="url(#bl)"/><path d="M110 28H130L127 46H113Z" fill="#efefed"/><path d="M54 10L62 22" stroke="#666" stroke-width="1.2"/><circle cx="42" cy="26" r="2" fill="#8a6a50"/></g><rect width="144" height="66" fill="#000" opacity="0.22"/></svg><div class="ct">직장인 대출</div><div class="cb1">서울 경기인천지역<br>간편상담</div><div class="hr" style="top:118px"></div><div class="ph"><svg width="10" height="10" viewBox="0 0 10 10" style="vertical-align:-1px;margin-right:3px"><path d="M1 1.5Q0 2.5 1.5 5Q3.5 8 6.5 9.3Q8 9.8 8.8 8.8L9.5 8L7.5 6L6.5 7Q4.5 6 3.5 3.5L4.5 2.5L2.5 0.5Z" fill="#333"/></svg>010-1234-5678</div><div class="hr" style="top:145px"></div><svg width="9" height="9" viewBox="0 0 10 11" style="position:absolute;left:8px;top:157px"><circle cx="5" cy="3" r="2.7" fill="#e8600f"/><path d="M0 11Q0 6 5 6Q10 6 10 11Z" fill="#e8600f"/></svg><div class="a" style="left:19px;top:155px;font-size:8px;color:#e8600f;letter-spacing:-0.8px">대출나라</div><div class="a" style="right:8px;top:155px;font-size:9px;color:#e8600f;letter-spacing:-0.8px">전국</div></div>

<div id="ov"></div>
<div id="pop">
<svg style="position:absolute;left:-3px;top:13px" width="158" height="25" viewBox="0 0 158 25"><defs><linearGradient id="rg" x1="0" y1="0" x2="1" y2="0.3"><stop offset="0" stop-color="#f47b14"/><stop offset="1" stop-color="#e95b0a"/></linearGradient></defs><path d="M0 0H144L157 25H0Z" fill="url(#rg)"/><rect x="0" y="0" width="3" height="25" fill="#652808"/></svg>
<div class="a" style="left:21px;top:15.5px;font-size:15px;font-weight:normal;color:#fff;letter-spacing:-0.45px;-webkit-text-stroke:0.45px #fff">Premium Banner</div>
<div style="position:absolute;left:162.0px;top:32px;width:6px;height:6px;border-radius:3px;background:#e8600f"></div><div style="position:absolute;left:171.4px;top:32px;width:6px;height:6px;border-radius:3px;background:#dcdfe3"></div><div style="position:absolute;left:180.8px;top:32px;width:6px;height:6px;border-radius:3px;background:#dcdfe3"></div><div style="position:absolute;left:190.2px;top:32px;width:6px;height:6px;border-radius:3px;background:#dcdfe3"></div><div style="position:absolute;left:199.6px;top:32px;width:6px;height:6px;border-radius:3px;background:#dcdfe3"></div><div style="position:absolute;left:209.0px;top:32px;width:6px;height:6px;border-radius:3px;background:#dcdfe3"></div><div class="a" style="left:22px;top:84px;font-size:12px;font-weight:bold;color:#ea5d0c;letter-spacing:-0.62px;text-shadow:0.3px 0 0 currentColor">직장인 대출 <span style="color:#333">사업자 대출</span></div>
<div style="position:absolute;left:22px;top:132px;width:190px;height:1px;background:#e8e8e8"></div>
<div class="a" style="left:22px;top:151px;width:24px;height:13px;border:1px solid #ea5d0c;border-radius:7px;font-size:10px;line-height:11px;text-align:center;color:#ea5d0c;letter-spacing:-1px">전국</div>
<svg style="position:absolute;left:166px;top:152px" width="10" height="10" viewBox="0 0 10 10"><circle cx="4.2" cy="4.2" r="3.2" fill="none" stroke="#ea5d0c" stroke-width="1.6"/><path d="M6.5 6.5L9 9" stroke="#ea5d0c" stroke-width="1.8"/></svg>
<div class="a" style="left:177px;top:150px;font-size:9px;font-weight:bold;color:#333;letter-spacing:0px">상세보기</div>
</div><div class="a" style="left:206.5px;top:312.2px;width:3px;height:3px;background:#e5e7eb"></div><div class="a" style="left:206.5px;top:315.2px;width:3px;height:3px;background:#a5a7ab"></div><div class="a" style="left:206.5px;top:318.2px;width:3px;height:3px;background:#f0f2f6"></div><div class="a" style="left:209.5px;top:312.2px;width:3px;height:3px;background:#dddfe3"></div><div class="a" style="left:209.5px;top:315.2px;width:3px;height:3px;background:#bdbfc3"></div><div class="a" style="left:209.5px;top:318.2px;width:3px;height:3px;background:#d2d4d8"></div><div class="a" style="left:212.5px;top:312.2px;width:3px;height:3px;background:#f4f6fa"></div><div class="a" style="left:212.5px;top:315.2px;width:3px;height:3px;background:#d2d4d8"></div><div class="a" style="left:212.5px;top:318.2px;width:3px;height:3px;background:#ced0d4"></div><div class="a" style="left:215.5px;top:312.2px;width:3px;height:3px;background:#e0e2e6"></div><div class="a" style="left:215.5px;top:315.2px;width:3px;height:3px;background:#d0d2d6"></div><div class="a" style="left:215.5px;top:318.2px;width:3px;height:3px;background:#d1d3d7"></div><div class="a" style="left:218.5px;top:312.2px;width:3px;height:3px;background:#f1f3f7"></div><div class="a" style="left:218.5px;top:315.2px;width:3px;height:3px;background:#d6d8dc"></div><div class="a" style="left:218.5px;top:318.2px;width:3px;height:3px;background:#e9ebef"></div><div class="a" style="left:221.5px;top:312.2px;width:3px;height:3px;background:#dfe1e5"></div><div class="a" style="left:221.5px;top:315.2px;width:3px;height:3px;background:#c7c9cd"></div><div class="a" style="left:221.5px;top:318.2px;width:3px;height:3px;background:#dadce0"></div><div class="a" style="left:224.5px;top:312.2px;width:3px;height:3px;background:#f4f6fa"></div><div class="a" style="left:224.5px;top:315.2px;width:3px;height:3px;background:#b0b2b6"></div><div class="a" style="left:224.5px;top:318.2px;width:3px;height:3px;background:#d1d3d7"></div><div class="a" style="left:227.5px;top:312.2px;width:3px;height:3px;background:#e9ebef"></div><div class="a" style="left:227.5px;top:315.2px;width:3px;height:3px;background:#a1a3a7"></div><div class="a" style="left:227.5px;top:318.2px;width:3px;height:3px;background:#d6d8dc"></div><div class="a" style="left:230.5px;top:312.2px;width:3px;height:3px;background:#eef0f4"></div><div class="a" style="left:230.5px;top:315.2px;width:3px;height:3px;background:#b7b9bd"></div><div class="a" style="left:230.5px;top:318.2px;width:3px;height:3px;background:#e4e6ea"></div><div class="a" style="left:233.5px;top:312.2px;width:3px;height:3px;background:#dbdde1"></div><div class="a" style="left:233.5px;top:315.2px;width:3px;height:3px;background:#d7d9dd"></div><div class="a" style="left:233.5px;top:318.2px;width:3px;height:3px;background:#dee0e4"></div><div class="a" style="left:236.5px;top:312.2px;width:3px;height:3px;background:#f3f5f9"></div><div class="a" style="left:236.5px;top:315.2px;width:3px;height:3px;background:#a4a6aa"></div><div class="a" style="left:236.5px;top:318.2px;width:3px;height:3px;background:#e4e6ea"></div><div class="a" style="left:239.5px;top:312.2px;width:3px;height:3px;background:#dee0e4"></div><div class="a" style="left:239.5px;top:315.2px;width:3px;height:3px;background:#d5d7db"></div><div class="a" style="left:239.5px;top:318.2px;width:3px;height:3px;background:#eceef2"></div><div class="a" style="left:242.5px;top:312.2px;width:3px;height:3px;background:#e3e5e9"></div><div class="a" style="left:242.5px;top:315.2px;width:3px;height:3px;background:#999b9f"></div><div class="a" style="left:242.5px;top:318.2px;width:3px;height:3px;background:#d7d9dd"></div><div class="a" style="left:245.5px;top:312.2px;width:3px;height:3px;background:#d7d9dd"></div><div class="a" style="left:245.5px;top:315.2px;width:3px;height:3px;background:#d4d6da"></div><div class="a" style="left:245.5px;top:318.2px;width:3px;height:3px;background:#e9ebef"></div><div class="a" style="left:248.5px;top:312.2px;width:3px;height:3px;background:#e3e5e9"></div><div class="a" style="left:248.5px;top:315.2px;width:3px;height:3px;background:#bcbec2"></div><div class="a" style="left:248.5px;top:318.2px;width:3px;height:3px;background:#d6d8dc"></div><div class="a" style="left:251.5px;top:312.2px;width:3px;height:3px;background:#e4e6ea"></div><div class="a" style="left:251.5px;top:315.2px;width:3px;height:3px;background:#c2c4c8"></div><div class="a" style="left:251.5px;top:318.2px;width:3px;height:3px;background:#e5e7eb"></div><div class="a" style="left:254.5px;top:312.2px;width:3px;height:3px;background:#e1e3e7"></div><div class="a" style="left:254.5px;top:315.2px;width:3px;height:3px;background:#a5a7ab"></div><div class="a" style="left:254.5px;top:318.2px;width:3px;height:3px;background:#e2e4e8"></div><div class="a" style="left:257.5px;top:312.2px;width:3px;height:3px;background:#d7d9dd"></div><div class="a" style="left:257.5px;top:315.2px;width:3px;height:3px;background:#bfc1c5"></div><div class="a" style="left:257.5px;top:318.2px;width:3px;height:3px;background:#e2e4e8"></div><div class="a" style="left:260.5px;top:312.2px;width:3px;height:3px;background:#f1f3f7"></div><div class="a" style="left:260.5px;top:315.2px;width:3px;height:3px;background:#c8cace"></div><div class="a" style="left:260.5px;top:318.2px;width:3px;height:3px;background:#d4d6da"></div><div class="a" style="left:263.5px;top:312.2px;width:3px;height:3px;background:#f5f7fb"></div><div class="a" style="left:263.5px;top:315.2px;width:3px;height:3px;background:#afb1b5"></div><div class="a" style="left:263.5px;top:318.2px;width:3px;height:3px;background:#cdcfd3"></div><div class="a" style="left:266.5px;top:312.2px;width:3px;height:3px;background:#f3f5f9"></div><div class="a" style="left:266.5px;top:315.2px;width:3px;height:3px;background:#bbbdc1"></div><div class="a" style="left:266.5px;top:318.2px;width:3px;height:3px;background:#dddfe3"></div><div class="a" style="left:269.5px;top:312.2px;width:3px;height:3px;background:#e2e4e8"></div><div class="a" style="left:269.5px;top:315.2px;width:3px;height:3px;background:#9ea0a4"></div><div class="a" style="left:269.5px;top:318.2px;width:3px;height:3px;background:#e6e8ec"></div><div class="a" style="left:272.5px;top:312.2px;width:3px;height:3px;background:#e3e5e9"></div><div class="a" style="left:272.5px;top:315.2px;width:3px;height:3px;background:#9fa1a5"></div><div class="a" style="left:272.5px;top:318.2px;width:3px;height:3px;background:#e4e6ea"></div><div class="a" style="left:275.5px;top:312.2px;width:3px;height:3px;background:#f4f6fa"></div><div class="a" style="left:275.5px;top:315.2px;width:3px;height:3px;background:#ccced2"></div><div class="a" style="left:275.5px;top:318.2px;width:3px;height:3px;background:#dee0e4"></div>
</body></html>
